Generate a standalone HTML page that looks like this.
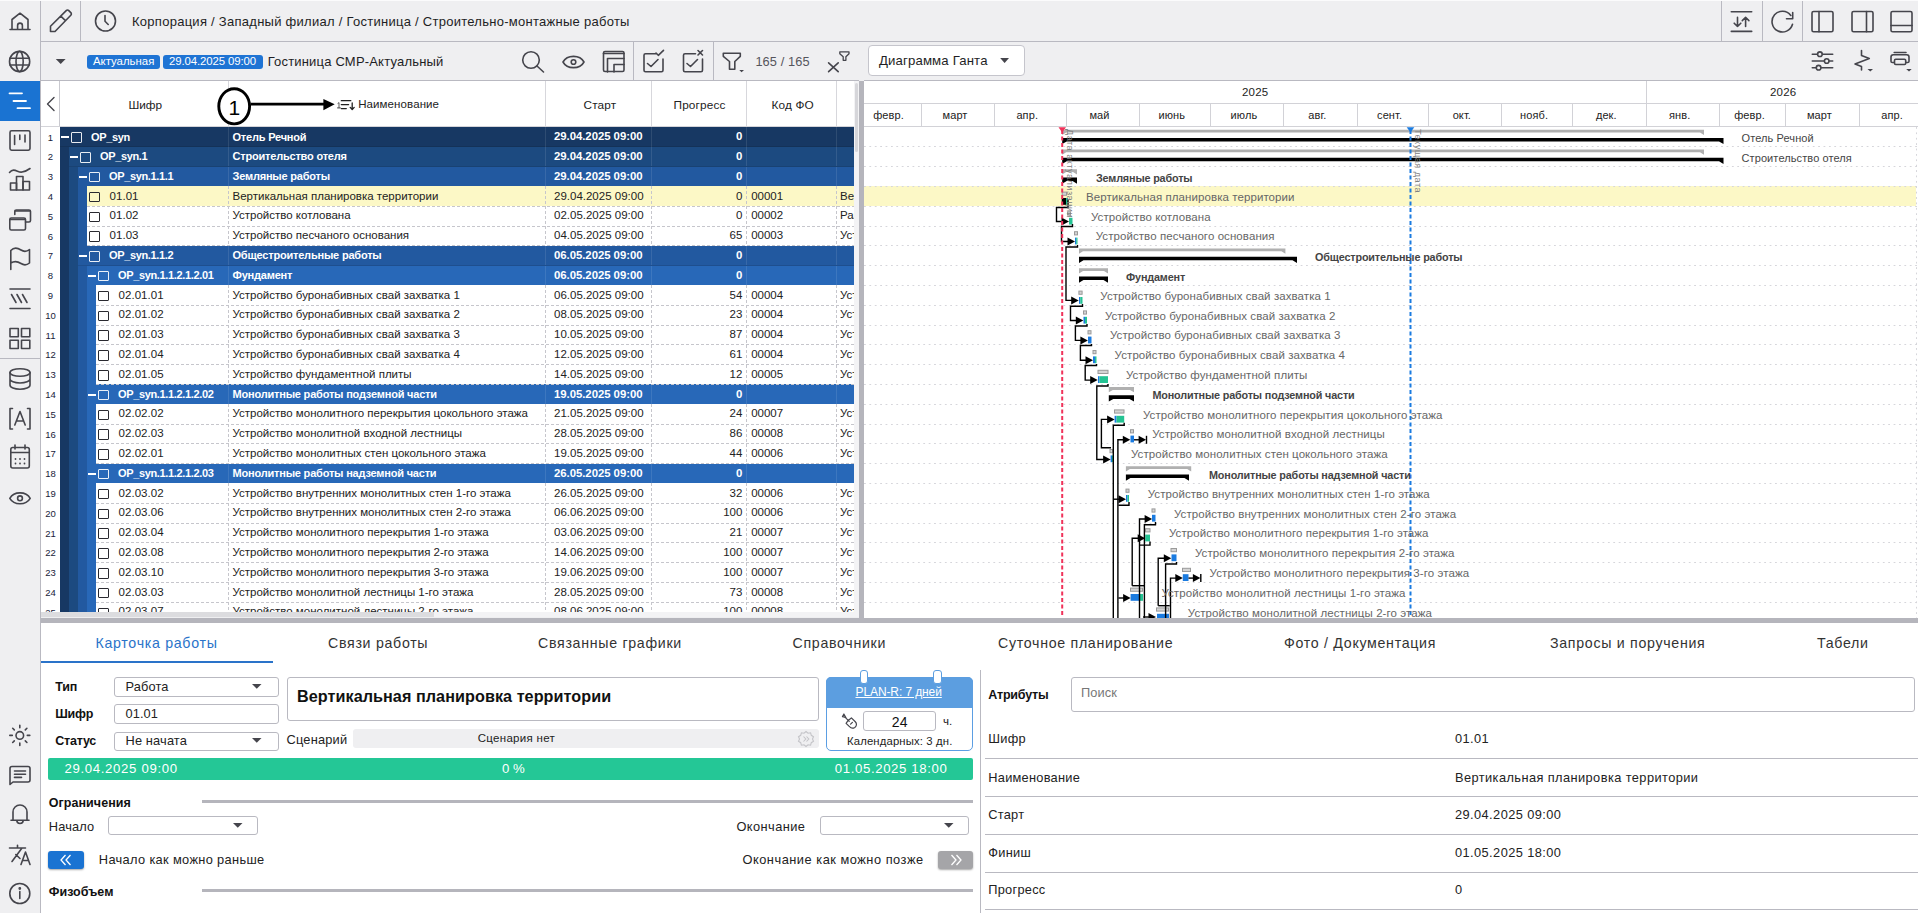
<!DOCTYPE html><html><head><meta charset="utf-8"><style>
*{box-sizing:border-box;margin:0;padding:0}
html,body{width:1918px;height:913px;overflow:hidden;background:#efeff1;font-family:"Liberation Sans",sans-serif;color:#222}
.a{position:absolute}
.t{position:absolute;white-space:nowrap;line-height:1}
svg{position:absolute;overflow:visible}
.ic{fill:none;stroke:#45454c;stroke-width:1.6;stroke-linecap:round;stroke-linejoin:round}
.vl{position:absolute;width:1px;background:#b9b9c1}
.hl{position:absolute;height:1px;background:#b9b9c1}
</style></head><body><div class="a" style="left:0px;top:0px;width:1918px;height:1px;background:#fbfbfc;"></div><div class="vl" style="left:40px;top:1px;height:912px"></div><div class="hl" style="left:41px;top:41px;width:1877px"></div><div class="vl" style="left:80px;top:1px;height:40px"></div><div class="vl" style="left:1721px;top:1px;height:40px"></div><div class="vl" style="left:1762px;top:1px;height:40px"></div><div class="vl" style="left:1802px;top:1px;height:40px"></div><div class="hl" style="left:0;top:358px;width:40px"></div><div class="a" style="left:0px;top:81px;width:40px;height:40px;background:#1a73d2;"></div><svg class="ic" style="left:0;top:0" width="40" height="913"><path d="M10 29.5H30M12 29.5V19.5L20 13.2L28 19.5V29.5M17.6 29.5V25.5A2.4 2.4 0 0 1 22.4 25.5V29.5"/><circle cx="19.6" cy="61.5" r="10.1"/><path d="M9.9 58.3H29.3M9.9 65H29.3"/><ellipse cx="19.6" cy="61.5" rx="3.6" ry="10.1"/><rect x="10" y="130.8" width="20" height="19.4" rx="1.6"/><path d="M14.6 135.5V144.5M19.8 135V139.5M25 135V142"/><path d="M9.5 172.5C14 167 18 173 22 172C25 171.5 28 170 30 168.5"/><rect x="10.5" y="183" width="6" height="7"/><rect x="16.5" y="176.5" width="6.5" height="13.5"/><rect x="23" y="181.5" width="6.5" height="8.5"/><path d="M14.8 214.5V211.5A1.5 1.5 0 0 1 16.3 210H29A1.5 1.5 0 0 1 30.5 211.5V220.5A1.5 1.5 0 0 1 29 222H25.5"/><rect x="9.8" y="218" width="15.7" height="12" rx="1.5"/><path d="M10 219.5H25.3M15 211H30.3" /><path d="M10.8 269.5V250.5C14 247 18 248 21 250C24 252 27 251.5 29.5 249.5V263C27 265 24 265.5 21 263.5C18 261.5 14 261 10.8 263"/><path d="M10 289H30M10 308.5H30M11.5 294.5L16 302.5M17 294.5L21.5 302.5M22.5 294.5L27 302.5"/><rect x="10" y="328.5" width="8.3" height="8.3"/><rect x="21.5" y="328.5" width="8.3" height="8.3"/><rect x="10" y="340.2" width="8.3" height="8.3"/><rect x="21.5" y="340.2" width="8.3" height="8.3"/><ellipse cx="20" cy="372.5" rx="10" ry="3.8"/><path d="M10 372.5V385C10 387.5 14.5 389.2 20 389.2C25.5 389.2 30 387.5 30 385V372.5M10 379C10 381.3 14.5 383 20 383C25.5 383 30 381.3 30 379"/><path d="M12.5 408.5H10V429H12.5M27.5 408.5H30V429H27.5M14.8 425L20 411.5L25.2 425M16.3 421H23.7"/><rect x="10.8" y="447.5" width="18.5" height="20.5" rx="2"/><path d="M10.8 452.5H29.3M15 445V449M25 445V449"/><g fill="#45454c" stroke="none"><circle cx="15.5" cy="459" r="0.9"/><circle cx="20" cy="459" r="0.9"/><circle cx="24.5" cy="459" r="0.9"/><circle cx="15.5" cy="463.5" r="0.9"/><circle cx="20" cy="463.5" r="0.9"/><circle cx="24.5" cy="463.5" r="0.9"/></g><path d="M9.8 498.3C14 491 26 491 30.2 498.3C26 505.5 14 505.5 9.8 498.3Z"/><circle cx="20" cy="498.3" r="2.4"/><circle cx="19.8" cy="735.4" r="3.8"/><path d="M19.8 725.3V727.8M19.8 743V745.5M9.8 735.4H12.3M27.3 735.4H29.8M12.7 728.3L14.3 729.9M25.3 740.9L26.9 742.5M12.7 742.5L14.3 740.9M25.3 729.9L26.9 728.3"/><path d="M10 784.5V768.5A2 2 0 0 1 12 766.5H28A2 2 0 0 1 30 768.5V780A2 2 0 0 1 28 782H13Z"/><path d="M14.5 771H25.5M14.5 774.2H25.5M14.5 777.4H21.5"/><path d="M11 820.3H29M13 820.3V812A7 7 0 0 1 27 812V820.3M16.8 820.3A3.2 3.2 0 0 0 23.2 820.3"/><path d="M9.5 848H25.5M17.5 845.2V848M22 848L12 861.5M15.8 854.5L20 858.5M21 864.5L25.5 852L30 864.5M22.5 860.5H28.5"/><circle cx="19.8" cy="893.5" r="10"/><path d="M19.8 891.5V898.5"/><circle cx="19.8" cy="888.5" r="0.6" fill="#45454c"/></svg><svg style="left:0;top:0" width="40" height="130"><path d="M9.5 93.3H22M13.5 101H26M17.5 108.2H30" stroke="#fff" stroke-width="1.8" stroke-linecap="round"/></svg><svg class="ic" style="left:0;top:0" width="120" height="41"><path d="M50.5 31.5V26.3L66.2 10.6A1.8 1.8 0 0 1 68.8 10.6L70.8 12.6A1.8 1.8 0 0 1 70.8 15.2L55 31.5Z M60.8 16.2L65.2 20.4"/><circle cx="105.5" cy="21" r="10"/><path d="M105 15.5V21.3L108.2 24.5"/></svg><div class="t" style="left:132px;top:14.9px;font-size:13px;color:#1e1e24;font-weight:normal;letter-spacing:0.27px;">Корпорация / Западный филиал / Гостиница / Строительно-монтажные работы</div><svg class="ic" style="left:0;top:0" width="1918" height="41"><path d="M1731.3 11.8H1751.7M1731.3 31.4H1751.7M1737.5 17.4V26.4M1734.2 23.2L1737.5 26.5L1740.8 23.2M1745.6 26.5V17.4M1742.3 20.6L1745.6 17.3L1748.9 20.6"/><path d="M1792.5 24.3A10.4 10.4 0 1 1 1790.8 15.4M1792.7 12.6V18.8H1786.5"/><rect x="1812" y="11.5" width="21" height="20.3" rx="1.6"/><path d="M1819 11.5V31.8"/><rect x="1852" y="11.5" width="21" height="20.3" rx="1.6"/><path d="M1866.5 11.5V31.8"/><rect x="1891" y="11.5" width="21" height="20.3" rx="1.6"/><path d="M1891 25.5H1912"/></svg><div class="hl" style="left:41px;top:80px;width:818px"></div><div class="hl" style="left:864px;top:80px;width:1054px"></div><svg style="left:0;top:0" width="80" height="80"><path d="M55.8 59H65.6L60.7 64Z" fill="#45454c"/></svg><div class="a" style="left:87px;top:54.5px;width:73px;height:14.5px;background:#1f74d4;border-radius:3px"></div><div class="a" style="left:163.3px;top:54.5px;width:99.6px;height:14.5px;background:#1f74d4;border-radius:3px"></div><div class="t" style="left:93px;top:56.05px;font-size:11.4px;color:#fff;font-weight:normal;letter-spacing:0px;">Актуальная</div><div class="t" style="left:169px;top:56.05px;font-size:11.4px;color:#fff;font-weight:normal;letter-spacing:-0.1px;">29.04.2025 09:00</div><div class="t" style="left:267.7px;top:54.6px;font-size:13.0px;color:#1e1e24;font-weight:normal;letter-spacing:0.19px;">Гостиница СМР-Актуальный</div><svg class="ic" style="left:0;top:0" width="860" height="81"><circle cx="531" cy="60" r="8.3"/><path d="M537 66L543.5 72"/><path d="M563 62C567 54.5 580 54.5 584 62C580 69.5 567 69.5 563 62Z"/><circle cx="573.5" cy="62" r="2.3"/><rect x="603.5" y="51.5" width="20.5" height="20" rx="1.5"/><path d="M603.5 53.5H624M607.5 72V58.5H624M614 72V64.5H624"/><path d="M656 53.7H645.5A1.5 1.5 0 0 0 644 55.2V70.3A1.5 1.5 0 0 0 645.5 71.8H661.5A1.5 1.5 0 0 0 663 70.3V59M647.5 63.5L651 66.5L658 59.5M656 53L658.3 55.3L663.5 50.3"/><path d="M695.5 53.7H685A1.5 1.5 0 0 0 683.5 55.2V70.3A1.5 1.5 0 0 0 685 71.8H701A1.5 1.5 0 0 0 702.5 70.3V59M687 63.5L690.5 66.5L697.5 59.5M698 50.5L702.5 55M702.5 50.5L698 55"/><path d="M723.3 53.3H740.3V56.3L734.8 61.5V69.3H729.5V61.5L723.3 56.3Z"/><path d="M739.3 70H744L741.6 72.2Z" fill="#45454c" stroke="none"/><path d="M828.6 62.8L838.2 71.6M838.2 62.8L828.6 71.6"/><path d="M839.8 51.8H849V53.8L845.9 56.8V60.3H843.2V56.8L839.8 53.8Z" stroke-width="1.3"/></svg><div class="vl" style="left:633px;top:42px;height:38px"></div><div class="vl" style="left:713px;top:42px;height:38px"></div><div class="t" style="left:755.4px;top:56.06px;font-size:12.8px;color:#55555c;font-weight:normal;letter-spacing:0.1px;">165 / 165</div><div class="a" style="left:868.3px;top:45.2px;width:157.2px;height:31.2px;background:#fff;border:1px solid #c5c5cc;border-radius:4px"></div><div class="t" style="left:878.9px;top:53.93px;font-size:13.2px;color:#1e1e24;font-weight:normal;letter-spacing:0.15px;">Диаграмма Ганта</div><svg style="left:0;top:0" width="1918" height="81"><path d="M1000.2 58H1009L1004.6 63Z" fill="#45454c"/></svg><svg class="ic" style="left:0;top:0" width="1918" height="81"><path d="M1812.3 54.2H1832.7M1812.3 61H1832.7M1812.3 67.7H1832.7"/><circle cx="1819.9" cy="54.2" r="2.3" fill="#efeff1"/><circle cx="1826.7" cy="61" r="2.3" fill="#efeff1"/><circle cx="1818.6" cy="67.7" r="2.3" fill="#efeff1"/><path d="M1861.5 50.5V55.5L1869.3 58.5L1855 64L1861.5 66.5V70"/><path d="M1867.5 69H1873L1870.3 71.6Z" fill="#45454c" stroke="none"/><path d="M1894.2 52.5H1906M1894 62.5H1892.3A1.3 1.3 0 0 1 1891 61.2V57A2.3 2.3 0 0 1 1893.3 54.7H1906.7A2.3 2.3 0 0 1 1909 57V61.2A1.3 1.3 0 0 1 1907.7 62.5H1906"/><rect x="1894.5" y="59.2" width="11.2" height="5.3" rx="1.2"/><path d="M1906.2 69H1911.7L1909 71.6Z" fill="#45454c" stroke="none"/></svg><div class="a" style="left:864px;top:81px;width:1054px;height:537px;background:#fff;"></div><div class="a" style="left:864px;top:102.5px;width:1054px;height:1px;background:#d2d2d7;"></div><div class="a" style="left:864px;top:125.5px;width:1054px;height:1px;background:#d2d2d7;"></div><div class="a" style="left:1645.7px;top:81px;width:1px;height:45px;background:#d2d2d7;"></div><div class="t" style="left:1242px;top:87.47px;font-size:11.5px;color:#222;font-weight:normal;letter-spacing:0.2px;">2025</div><div class="t" style="left:1770px;top:87.47px;font-size:11.5px;color:#222;font-weight:normal;letter-spacing:0.2px;">2026</div><div class="t" style="left:838.5px;width:100px;text-align:center;top:109.9885px;font-size:11px;color:#222;letter-spacing:0.1px">февр.</div><div class="a" style="left:921.0px;top:103px;width:1px;height:23px;background:#d2d2d7;"></div><div class="t" style="left:905.00865px;width:100px;text-align:center;top:109.9885px;font-size:11px;color:#222;letter-spacing:0.1px">март</div><div class="a" style="left:994.4px;top:103px;width:1px;height:23px;background:#d2d2d7;"></div><div class="t" style="left:977.2418px;width:100px;text-align:center;top:109.9885px;font-size:11px;color:#222;letter-spacing:0.1px">апр.</div><div class="a" style="left:1065.5px;top:103px;width:1px;height:23px;background:#d2d2d7;"></div><div class="t" style="left:1049.47495px;width:100px;text-align:center;top:109.9885px;font-size:11px;color:#222;letter-spacing:0.1px">май</div><div class="a" style="left:1138.9px;top:103px;width:1px;height:23px;background:#d2d2d7;"></div><div class="t" style="left:1121.7081px;width:100px;text-align:center;top:109.9885px;font-size:11px;color:#222;letter-spacing:0.1px">июнь</div><div class="a" style="left:1209.9px;top:103px;width:1px;height:23px;background:#d2d2d7;"></div><div class="t" style="left:1193.94125px;width:100px;text-align:center;top:109.9885px;font-size:11px;color:#222;letter-spacing:0.1px">июль</div><div class="a" style="left:1283.3px;top:103px;width:1px;height:23px;background:#d2d2d7;"></div><div class="t" style="left:1267.3585500000002px;width:100px;text-align:center;top:109.9885px;font-size:11px;color:#222;letter-spacing:0.1px">авг.</div><div class="a" style="left:1356.8px;top:103px;width:1px;height:23px;background:#d2d2d7;"></div><div class="t" style="left:1339.5917000000002px;width:100px;text-align:center;top:109.9885px;font-size:11px;color:#222;letter-spacing:0.1px">сент.</div><div class="a" style="left:1427.8px;top:103px;width:1px;height:23px;background:#d2d2d7;"></div><div class="t" style="left:1411.8248500000002px;width:100px;text-align:center;top:109.9885px;font-size:11px;color:#222;letter-spacing:0.1px">окт.</div><div class="a" style="left:1501.2px;top:103px;width:1px;height:23px;background:#d2d2d7;"></div><div class="t" style="left:1484.0580000000002px;width:100px;text-align:center;top:109.9885px;font-size:11px;color:#222;letter-spacing:0.1px">нояб.</div><div class="a" style="left:1572.3px;top:103px;width:1px;height:23px;background:#d2d2d7;"></div><div class="t" style="left:1556.2911500000002px;width:100px;text-align:center;top:109.9885px;font-size:11px;color:#222;letter-spacing:0.1px">дек.</div><div class="a" style="left:1645.7px;top:103px;width:1px;height:23px;background:#d2d2d7;"></div><div class="t" style="left:1629.70845px;width:100px;text-align:center;top:109.9885px;font-size:11px;color:#222;letter-spacing:0.1px">янв.</div><div class="a" style="left:1719.1px;top:103px;width:1px;height:23px;background:#d2d2d7;"></div><div class="t" style="left:1699.5733000000002px;width:100px;text-align:center;top:109.9885px;font-size:11px;color:#222;letter-spacing:0.1px">февр.</div><div class="a" style="left:1785.4px;top:103px;width:1px;height:23px;background:#d2d2d7;"></div><div class="t" style="left:1769.4381500000002px;width:100px;text-align:center;top:109.9885px;font-size:11px;color:#222;letter-spacing:0.1px">март</div><div class="a" style="left:1858.8px;top:103px;width:1px;height:23px;background:#d2d2d7;"></div><div class="t" style="left:1842px;width:100px;text-align:center;top:109.9885px;font-size:11px;color:#222;letter-spacing:0.1px">апр.</div><div class="a" style="left:864px;top:186.3px;width:1052px;height:19.8px;background:#fcf8c6;"></div><div class="a" style="left:864px;top:146.0px;width:1054px;height:1px;background-image:linear-gradient(90deg,#d6d6db 30%,transparent 30%);background-size:5.4px 1px"></div><div class="a" style="left:864px;top:166.0px;width:1054px;height:1px;background-image:linear-gradient(90deg,#d6d6db 30%,transparent 30%);background-size:5.4px 1px"></div><div class="a" style="left:864px;top:186.0px;width:1054px;height:1px;background-image:linear-gradient(90deg,#d6d6db 30%,transparent 30%);background-size:5.4px 1px"></div><div class="a" style="left:864px;top:206.0px;width:1054px;height:1px;background-image:linear-gradient(90deg,#d6d6db 30%,transparent 30%);background-size:5.4px 1px"></div><div class="a" style="left:864px;top:226.0px;width:1054px;height:1px;background-image:linear-gradient(90deg,#d6d6db 30%,transparent 30%);background-size:5.4px 1px"></div><div class="a" style="left:864px;top:245.0px;width:1054px;height:1px;background-image:linear-gradient(90deg,#d6d6db 30%,transparent 30%);background-size:5.4px 1px"></div><div class="a" style="left:864px;top:265.0px;width:1054px;height:1px;background-image:linear-gradient(90deg,#d6d6db 30%,transparent 30%);background-size:5.4px 1px"></div><div class="a" style="left:864px;top:285.0px;width:1054px;height:1px;background-image:linear-gradient(90deg,#d6d6db 30%,transparent 30%);background-size:5.4px 1px"></div><div class="a" style="left:864px;top:305.0px;width:1054px;height:1px;background-image:linear-gradient(90deg,#d6d6db 30%,transparent 30%);background-size:5.4px 1px"></div><div class="a" style="left:864px;top:325.0px;width:1054px;height:1px;background-image:linear-gradient(90deg,#d6d6db 30%,transparent 30%);background-size:5.4px 1px"></div><div class="a" style="left:864px;top:344.0px;width:1054px;height:1px;background-image:linear-gradient(90deg,#d6d6db 30%,transparent 30%);background-size:5.4px 1px"></div><div class="a" style="left:864px;top:364.0px;width:1054px;height:1px;background-image:linear-gradient(90deg,#d6d6db 30%,transparent 30%);background-size:5.4px 1px"></div><div class="a" style="left:864px;top:384.0px;width:1054px;height:1px;background-image:linear-gradient(90deg,#d6d6db 30%,transparent 30%);background-size:5.4px 1px"></div><div class="a" style="left:864px;top:404.0px;width:1054px;height:1px;background-image:linear-gradient(90deg,#d6d6db 30%,transparent 30%);background-size:5.4px 1px"></div><div class="a" style="left:864px;top:424.0px;width:1054px;height:1px;background-image:linear-gradient(90deg,#d6d6db 30%,transparent 30%);background-size:5.4px 1px"></div><div class="a" style="left:864px;top:443.0px;width:1054px;height:1px;background-image:linear-gradient(90deg,#d6d6db 30%,transparent 30%);background-size:5.4px 1px"></div><div class="a" style="left:864px;top:463.0px;width:1054px;height:1px;background-image:linear-gradient(90deg,#d6d6db 30%,transparent 30%);background-size:5.4px 1px"></div><div class="a" style="left:864px;top:483.0px;width:1054px;height:1px;background-image:linear-gradient(90deg,#d6d6db 30%,transparent 30%);background-size:5.4px 1px"></div><div class="a" style="left:864px;top:503.0px;width:1054px;height:1px;background-image:linear-gradient(90deg,#d6d6db 30%,transparent 30%);background-size:5.4px 1px"></div><div class="a" style="left:864px;top:523.0px;width:1054px;height:1px;background-image:linear-gradient(90deg,#d6d6db 30%,transparent 30%);background-size:5.4px 1px"></div><div class="a" style="left:864px;top:542.0px;width:1054px;height:1px;background-image:linear-gradient(90deg,#d6d6db 30%,transparent 30%);background-size:5.4px 1px"></div><div class="a" style="left:864px;top:562.0px;width:1054px;height:1px;background-image:linear-gradient(90deg,#d6d6db 30%,transparent 30%);background-size:5.4px 1px"></div><div class="a" style="left:864px;top:582.0px;width:1054px;height:1px;background-image:linear-gradient(90deg,#d6d6db 30%,transparent 30%);background-size:5.4px 1px"></div><div class="a" style="left:864px;top:602.0px;width:1054px;height:1px;background-image:linear-gradient(90deg,#d6d6db 30%,transparent 30%);background-size:5.4px 1px"></div><div class="a" style="left:864px;top:622.0px;width:1054px;height:1px;background-image:linear-gradient(90deg,#d6d6db 30%,transparent 30%);background-size:5.4px 1px"></div><div class="a" style="left:1916px;top:127px;width:1px;height:491px;background-image:linear-gradient(180deg,#d6d6db 40%,transparent 40%);background-size:1px 5.4px"></div><svg style="left:0;top:0" width="1918" height="618"><path d="M1062.2 129.70000000000002H1704V134.9L1700 132.5H1066.2L1062.2 134.9Z" fill="#b0b0b0"/><path d="M1062.2 137.9H1723.5V144.1L1719.0 141.5H1066.7L1062.2 144.1Z" fill="#000"/><path d="M1062.2 149.50000000000003H1704V154.70000000000002L1700 152.3H1066.2L1062.2 154.70000000000002Z" fill="#b0b0b0"/><path d="M1062.2 157.70000000000002H1723.5V163.9L1719.0 161.3H1066.7L1062.2 163.9Z" fill="#000"/><path d="M1062.2 169.3H1077V174.5L1073 172.1H1066.2L1062.2 174.5Z" fill="#b0b0b0"/><path d="M1062.2 177.5H1077V183.7L1072.5 181.1H1066.7L1062.2 183.7Z" fill="#000"/><path d="M1079 248.50000000000003H1285.4V253.70000000000002L1281.4 251.3H1083L1079 253.70000000000002Z" fill="#b0b0b0"/><path d="M1079 256.70000000000005H1297V262.90000000000003L1292.5 260.3H1083.5L1079 262.90000000000003Z" fill="#000"/><path d="M1079 268.3H1108V273.5L1104 271.1H1083L1079 273.5Z" fill="#b0b0b0"/><path d="M1079 276.5H1108V282.7L1103.5 280.1H1083.5L1079 282.7Z" fill="#000"/><path d="M1108.8 387.1000000000001H1134V392.30000000000007L1130 389.9000000000001H1112.8L1108.8 392.30000000000007Z" fill="#b0b0b0"/><path d="M1108.8 395.30000000000007H1134V401.50000000000006L1129.5 398.9000000000001H1113.3L1108.8 401.50000000000006Z" fill="#000"/><path d="M1125.9 466.3H1191.2V471.5L1187.2 469.1H1129.9L1125.9 471.5Z" fill="#b0b0b0"/><path d="M1125.9 474.5H1189V480.7L1184.5 478.1H1130.4L1125.9 480.7Z" fill="#000"/><rect x="1062.2" y="192.10000000000002" width="4.2999999999999545" height="3.2" fill="#d4d4d4" stroke="#9a9a9a" stroke-width="1"/><rect x="1061.7" y="198.0" width="4.2999999999999545" height="6.8" fill="#000"/><rect x="1066" y="198.0" width="2" height="6.8" fill="#24c393"/><rect x="1067.5" y="211.90000000000003" width="3" height="3.2" fill="#d4d4d4" stroke="#9a9a9a" stroke-width="1"/><rect x="1069" y="217.8" width="3.5" height="6.8" fill="#24c393"/><rect x="1074.5" y="231.70000000000002" width="3" height="3.2" fill="#d4d4d4" stroke="#9a9a9a" stroke-width="1"/><rect x="1075" y="237.6" width="1.2000000000000455" height="6.8" fill="#1a7be0"/><rect x="1076.2" y="237.6" width="1.2999999999999545" height="6.8" fill="#24c393"/><rect x="1078.9" y="291.1" width="3.199999999999818" height="3.2" fill="#d4d4d4" stroke="#9a9a9a" stroke-width="1"/><rect x="1079" y="297.0" width="1.2999999999999545" height="6.8" fill="#1a7be0"/><rect x="1080.3" y="297.0" width="2.2000000000000455" height="6.8" fill="#24c393"/><rect x="1083.5" y="310.90000000000003" width="3" height="3.2" fill="#d4d4d4" stroke="#9a9a9a" stroke-width="1"/><rect x="1083.5" y="316.8" width="1.5" height="6.8" fill="#1a7be0"/><rect x="1085" y="316.8" width="2" height="6.8" fill="#24c393"/><rect x="1088.0" y="330.7" width="3.0" height="3.2" fill="#d4d4d4" stroke="#9a9a9a" stroke-width="1"/><rect x="1088" y="336.59999999999997" width="3.5" height="6.8" fill="#1a7be0"/><rect x="1093.0" y="350.50000000000006" width="3.0" height="3.2" fill="#d4d4d4" stroke="#9a9a9a" stroke-width="1"/><rect x="1093" y="356.40000000000003" width="2" height="6.8" fill="#1a7be0"/><rect x="1095" y="356.40000000000003" width="1.5" height="6.8" fill="#24c393"/><rect x="1098.0" y="370.3" width="10.0" height="3.2" fill="#d4d4d4" stroke="#9a9a9a" stroke-width="1"/><rect x="1098" y="376.2" width="1.5" height="6.8" fill="#1a7be0"/><rect x="1099.5" y="376.2" width="8.5" height="6.8" fill="#24c393"/><rect x="1114.5" y="409.90000000000003" width="9.5" height="3.2" fill="#d4d4d4" stroke="#9a9a9a" stroke-width="1"/><rect x="1114.6" y="415.8" width="1.900000000000091" height="6.8" fill="#1a7be0"/><rect x="1116.5" y="415.8" width="7.7000000000000455" height="6.8" fill="#24c393"/><rect x="1130.5" y="429.7" width="3" height="3.2" fill="#d4d4d4" stroke="#9a9a9a" stroke-width="1"/><rect x="1130.5" y="435.59999999999997" width="3.5" height="6.8" fill="#1a7be0"/><rect x="1110.0" y="449.50000000000006" width="2.5" height="3.2" fill="#d4d4d4" stroke="#9a9a9a" stroke-width="1"/><rect x="1110.6" y="455.40000000000003" width="1.400000000000091" height="6.8" fill="#1a7be0"/><rect x="1112" y="455.40000000000003" width="1.2000000000000455" height="6.8" fill="#24c393"/><rect x="1126.0" y="489.1000000000001" width="3.0" height="3.2" fill="#d4d4d4" stroke="#9a9a9a" stroke-width="1"/><rect x="1126" y="495.00000000000006" width="1.5" height="6.8" fill="#1a7be0"/><rect x="1127.5" y="495.00000000000006" width="1.5" height="6.8" fill="#24c393"/><rect x="1152.0" y="508.90000000000003" width="3.0" height="3.2" fill="#d4d4d4" stroke="#9a9a9a" stroke-width="1"/><rect x="1152" y="514.8000000000001" width="3.5" height="6.8" fill="#1a7be0"/><rect x="1145.5" y="528.6999999999999" width="4.5" height="3.2" fill="#d4d4d4" stroke="#9a9a9a" stroke-width="1"/><rect x="1145.2" y="534.6" width="4.7999999999999545" height="6.8" fill="#24c393"/><rect x="1171.0" y="548.5" width="5.5" height="3.2" fill="#d4d4d4" stroke="#9a9a9a" stroke-width="1"/><rect x="1171.5" y="554.4000000000001" width="5.0" height="6.8" fill="#1a7be0"/><rect x="1182.5" y="568.3" width="8" height="3.2" fill="#d4d4d4" stroke="#9a9a9a" stroke-width="1"/><rect x="1182.8" y="574.2" width="5.7000000000000455" height="6.8" fill="#1a7be0"/><rect x="1130.5" y="588.1" width="12" height="3.2" fill="#d4d4d4" stroke="#9a9a9a" stroke-width="1"/><rect x="1130.6" y="594.0000000000001" width="9.400000000000091" height="6.8" fill="#1a7be0"/><rect x="1140" y="594.0000000000001" width="3" height="6.8" fill="#24c393"/><rect x="1156.5" y="607.9" width="12" height="3.2" fill="#d4d4d4" stroke="#9a9a9a" stroke-width="1"/><rect x="1157" y="613.8000000000001" width="12" height="6.8" fill="#1a7be0"/><path d="M1068 199V207.5H1056.5V221.5H1063" fill="none" stroke="#000" stroke-width="1.4"/><path d="M1072.5 224V226.5H1061.5V241.5H1069" fill="none" stroke="#000" stroke-width="1.4"/><path d="M1077.5 245V247H1066V300.4H1073" fill="none" stroke="#000" stroke-width="1.4"/><path d="M1082.5 304V306.3H1070.5V320.5H1077.5" fill="none" stroke="#000" stroke-width="1.4"/><path d="M1087 324V326H1075.4V340.4H1082" fill="none" stroke="#000" stroke-width="1.4"/><path d="M1091.5 344V345.5H1080.4V360.2H1087" fill="none" stroke="#000" stroke-width="1.4"/><path d="M1096.5 364V365.5H1085.2V380.1H1092" fill="none" stroke="#000" stroke-width="1.4"/><path d="M1108 384V386H1096.8V459.5H1104.5" fill="none" stroke="#000" stroke-width="1.4"/><path d="M1111 447.7H1101.4V419.4H1109" fill="none" stroke="#000" stroke-width="1.4"/><path d="M1124.2 422.7V425.3H1113.3V618" fill="none" stroke="#000" stroke-width="1.4"/><path d="M1117.9 618V439.8H1124.5" fill="none" stroke="#000" stroke-width="1.4"/><path d="M1134 439.8H1140" fill="none" stroke="#000" stroke-width="1.4"/><path d="M1146.5 435.8V443.8" fill="none" stroke="#000" stroke-width="1.4"/><path d="M1113.3 499.2H1120" fill="none" stroke="#000" stroke-width="1.4"/><path d="M1129 502V505.3H1118.4" fill="none" stroke="#000" stroke-width="1.4"/><path d="M1118.4 598H1124.5" fill="none" stroke="#000" stroke-width="1.4"/><path d="M1139.5 618V519H1146" fill="none" stroke="#000" stroke-width="1.4"/><path d="M1155.5 522V524.7H1144.4V618" fill="none" stroke="#000" stroke-width="1.4"/><path d="M1132.2 585.7V538.2H1139" fill="none" stroke="#000" stroke-width="1.4"/><path d="M1132.2 585.7H1144.4" fill="none" stroke="#000" stroke-width="1.4"/><path d="M1150 541.5V545.1H1139.5" fill="none" stroke="#000" stroke-width="1.4"/><path d="M1158.2 605.7V558.2H1165" fill="none" stroke="#000" stroke-width="1.4"/><path d="M1158.2 605.7H1169.7" fill="none" stroke="#000" stroke-width="1.4"/><path d="M1176.5 562V564H1165.6V618" fill="none" stroke="#000" stroke-width="1.4"/><path d="M1170.5 618V578.1H1177" fill="none" stroke="#000" stroke-width="1.4"/><path d="M1188.5 578.1H1194" fill="none" stroke="#000" stroke-width="1.4"/><path d="M1200.8 574.1V582.1" fill="none" stroke="#000" stroke-width="1.4"/><path d="M1143 617H1150" fill="none" stroke="#000" stroke-width="1.4"/><path d="M1061.5 217.5L1069 221.5L1061.5 225.5Z" fill="#000"/><path d="M1067.5 237.5L1075 241.5L1067.5 245.5Z" fill="#000"/><path d="M1071.2 296.4L1078.7 300.4L1071.2 304.4Z" fill="#000"/><path d="M1075.8 316.5L1083.3 320.5L1075.8 324.5Z" fill="#000"/><path d="M1080.4 336.4L1087.9 340.4L1080.4 344.4Z" fill="#000"/><path d="M1085.5 356.2L1093 360.2L1085.5 364.2Z" fill="#000"/><path d="M1090.2 376.1L1097.7 380.1L1090.2 384.1Z" fill="#000"/><path d="M1103.1 455.5L1110.6 459.5L1103.1 463.5Z" fill="#000"/><path d="M1107.1 415.4L1114.6 419.4L1107.1 423.4Z" fill="#000"/><path d="M1122.8 435.8L1130.3 439.8L1122.8 443.8Z" fill="#000"/><path d="M1138.6 435.8L1146.1 439.8L1138.6 443.8Z" fill="#000"/><path d="M1118.5 495.2L1126 499.2L1118.5 503.2Z" fill="#000"/><path d="M1123.1 594L1130.6 598L1123.1 602Z" fill="#000"/><path d="M1144.6 515L1152.1 519L1144.6 523Z" fill="#000"/><path d="M1137.7 534.2L1145.2 538.2L1137.7 542.2Z" fill="#000"/><path d="M1163.8 554.2L1171.3 558.2L1163.8 562.2Z" fill="#000"/><path d="M1175.3 574.1L1182.8 578.1L1175.3 582.1Z" fill="#000"/><path d="M1192.9 574.1L1200.4 578.1L1192.9 582.1Z" fill="#000"/><path d="M1148.5 613L1156 617L1148.5 621Z" fill="#000"/><path d="M1062.2 130V617" stroke="#f0325a" stroke-width="2" stroke-dasharray="4 2.5"/><path d="M1058.5 127.3H1066L1062.2 132.6Z" fill="#f0325a"/><path d="M1410.5 130V617" stroke="#1a7be0" stroke-width="2" stroke-dasharray="4 2.5"/><path d="M1406.7 127.3H1414.3L1410.5 132.6Z" fill="#1a7be0"/></svg><div class="t" style="left:1064.5px;top:128.5px;font-size:9.2px;color:#808080;letter-spacing:0.45px;transform-origin:0 0;transform:rotate(90deg) translate(0,-9px);">Дата актуализации</div><div class="t" style="left:1413px;top:128.5px;font-size:9.2px;color:#808080;letter-spacing:0.45px;transform-origin:0 0;transform:rotate(90deg) translate(0,-9px);">Текущая дата</div><div class="t" style="left:1741.5px;top:132.99px;font-size:11px;color:#444;font-weight:normal;letter-spacing:0.1px;">Отель Речной</div><div class="t" style="left:1741.5px;top:152.79px;font-size:11px;color:#444;font-weight:normal;letter-spacing:0.1px;">Строительство отеля</div><div class="t" style="left:1096px;top:172.56px;font-size:10.8px;color:#444;font-weight:bold;letter-spacing:-0.15px;">Земляные работы</div><div class="t" style="left:1315px;top:251.76px;font-size:10.8px;color:#444;font-weight:bold;letter-spacing:-0.15px;">Общестроительные работы</div><div class="t" style="left:1126px;top:271.56px;font-size:10.8px;color:#444;font-weight:bold;letter-spacing:-0.15px;">Фундамент</div><div class="t" style="left:1152.4px;top:390.36px;font-size:10.8px;color:#444;font-weight:bold;letter-spacing:-0.15px;">Монолитные работы подземной части</div><div class="t" style="left:1209px;top:469.56px;font-size:10.8px;color:#444;font-weight:bold;letter-spacing:-0.15px;">Монолитные работы надземной части</div><div class="t" style="left:1086px;top:191.87px;font-size:11.5px;color:#666;font-weight:normal;letter-spacing:0.08px;">Вертикальная планировка территории</div><div class="t" style="left:1091px;top:211.67px;font-size:11.5px;color:#666;font-weight:normal;letter-spacing:0.08px;">Устройство котлована</div><div class="t" style="left:1095.7px;top:231.47px;font-size:11.5px;color:#666;font-weight:normal;letter-spacing:0.08px;">Устройство песчаного основания</div><div class="t" style="left:1100.3px;top:290.87px;font-size:11.5px;color:#666;font-weight:normal;letter-spacing:0.08px;">Устройство буронабивных свай захватка 1</div><div class="t" style="left:1104.9px;top:310.67px;font-size:11.5px;color:#666;font-weight:normal;letter-spacing:0.08px;">Устройство буронабивных свай захватка 2</div><div class="t" style="left:1110px;top:330.47px;font-size:11.5px;color:#666;font-weight:normal;letter-spacing:0.08px;">Устройство буронабивных свай захватка 3</div><div class="t" style="left:1114.6px;top:350.27px;font-size:11.5px;color:#666;font-weight:normal;letter-spacing:0.08px;">Устройство буронабивных свай захватка 4</div><div class="t" style="left:1126px;top:370.07px;font-size:11.5px;color:#666;font-weight:normal;letter-spacing:0.08px;">Устройство фундаментной плиты</div><div class="t" style="left:1143px;top:409.67px;font-size:11.5px;color:#666;font-weight:normal;letter-spacing:0.08px;">Устройство монолитного перекрытия цокольного этажа</div><div class="t" style="left:1152.2px;top:429.47px;font-size:11.5px;color:#666;font-weight:normal;letter-spacing:0.08px;">Устройство монолитной входной лестницы</div><div class="t" style="left:1131px;top:449.27px;font-size:11.5px;color:#666;font-weight:normal;letter-spacing:0.08px;">Устройство монолитных стен цокольного этажа</div><div class="t" style="left:1147.7px;top:488.87px;font-size:11.5px;color:#666;font-weight:normal;letter-spacing:0.08px;">Устройство внутренних монолитных стен 1-го этажа</div><div class="t" style="left:1174px;top:508.67px;font-size:11.5px;color:#666;font-weight:normal;letter-spacing:0.08px;">Устройство внутренних монолитных стен 2-го этажа</div><div class="t" style="left:1169px;top:528.47px;font-size:11.5px;color:#666;font-weight:normal;letter-spacing:0.08px;">Устройство монолитного перекрытия 1-го этажа</div><div class="t" style="left:1195px;top:548.27px;font-size:11.5px;color:#666;font-weight:normal;letter-spacing:0.08px;">Устройство монолитного перекрытия 2-го этажа</div><div class="t" style="left:1209.6px;top:568.07px;font-size:11.5px;color:#666;font-weight:normal;letter-spacing:0.08px;">Устройство монолитного перекрытия 3-го этажа</div><div class="t" style="left:1161.4px;top:587.87px;font-size:11.5px;color:#666;font-weight:normal;letter-spacing:0.08px;">Устройство монолитной лестницы 1-го этажа</div><div class="t" style="left:1187.8px;top:607.67px;font-size:11.5px;color:#666;font-weight:normal;letter-spacing:0.08px;">Устройство монолитной лестницы 2-го этажа</div><div class="a" style="left:41px;top:81px;width:818px;height:46px;background:#fff;"></div><div class="a" style="left:59px;top:81px;width:1px;height:46px;background:#c9c9cf"></div><div class="a" style="left:41px;top:126px;width:813px;height:1px;background:#d4d4d9"></div><div class="a" style="left:228px;top:81px;width:1px;height:45px;background:#d7d7dc"></div><div class="a" style="left:545px;top:81px;width:1px;height:45px;background:#d7d7dc"></div><div class="a" style="left:651px;top:81px;width:1px;height:45px;background:#d7d7dc"></div><div class="a" style="left:746px;top:81px;width:1px;height:45px;background:#d7d7dc"></div><div class="a" style="left:836px;top:81px;width:1px;height:45px;background:#d7d7dc"></div><svg class="ic" style="left:0;top:0" width="60" height="127"><path d="M54 97.5L47.5 104L54 110.5" stroke-width="1.4"/></svg><div class="t" style="left:128.6px;top:100.01px;font-size:11.8px;color:#222;font-weight:normal;letter-spacing:-0.1px;">Шифр</div><div class="t" style="left:358.2px;top:98.97px;font-size:11.5px;color:#222;font-weight:normal;letter-spacing:0.1px;">Наименование</div><div class="t" style="left:583.5px;top:100.01px;font-size:11.8px;color:#222;font-weight:normal;letter-spacing:0.15px;">Старт</div><div class="t" style="left:673.5px;top:100.01px;font-size:11.8px;color:#222;font-weight:normal;letter-spacing:0.15px;">Прогресс</div><div class="t" style="left:771.5px;top:100.01px;font-size:11.8px;color:#222;font-weight:normal;letter-spacing:0.15px;">Код ФО</div><svg class="ic" style="left:0;top:0" width="400" height="127"><path d="M341.3 100.7H350.8M341.3 104.6H348.6M341.3 108.6H346.3M352.2 103V109.3M350.2 107.4L352.2 109.5L354.2 107.4" stroke="#222" stroke-width="1.3"/><path d="M337.9 103.4L339 102.6V107.9M337.4 107.9H340.4" stroke="#333" stroke-width="0.8"/></svg><svg style="left:0;top:0" width="400" height="130"><ellipse cx="234.2" cy="106.3" rx="15.4" ry="17.6" fill="#fff" stroke="#000" stroke-width="2.9"/><path d="M251 104.2H325" stroke="#000" stroke-width="2.8"/><path d="M323.4 98.9L334.7 104.2L323.4 110.2Z" fill="#000"/></svg><div class="t" style="left:228.5px;top:96.52px;font-size:21px;color:#000;font-weight:normal;letter-spacing:0px;">1</div><div class="a" style="left:41px;top:127px;width:813px;height:485px;overflow:hidden;background:#fff"><div class="a" style="left:19px;top:-0.09999999999999432px;width:794px;height:20.3px;background:#173863;"></div><div class="a" style="left:19px;top:19.100000000000005px;width:794px;height:0.8px;background:rgba(0,0,0,0.10);"></div><div class="a" style="left:187px;top:-0.09999999999999432px;width:1px;height:19.8px;background:rgba(255,255,255,0.10);"></div><div class="a" style="left:504px;top:-0.09999999999999432px;width:1px;height:19.8px;background:rgba(255,255,255,0.10);"></div><div class="a" style="left:610px;top:-0.09999999999999432px;width:1px;height:19.8px;background:rgba(255,255,255,0.10);"></div><div class="a" style="left:705px;top:-0.09999999999999432px;width:1px;height:19.8px;background:rgba(255,255,255,0.10);"></div><div class="a" style="left:795px;top:-0.09999999999999432px;width:1px;height:19.8px;background:rgba(255,255,255,0.10);"></div><div class="a" style="left:19.8px;top:9.200000000000006px;width:8.6px;height:2.0px;background:#fff;"></div><div class="a" style="left:29.6px;top:5.300000000000006px;width:11px;height:10.5px;border:1.2px solid rgba(255,255,255,0.9);border-radius:1px"></div><div class="t" style="left:50px;top:4.69px;font-size:11.0px;color:#fff;font-weight:bold;letter-spacing:-0.35px;">OP_syn</div><div class="t" style="left:191.5px;top:4.69px;font-size:11.0px;color:#fff;font-weight:bold;letter-spacing:-0.2px;">Отель Речной</div><div class="t" style="left:513px;top:4.35px;font-size:11.4px;color:#fff;font-weight:bold;letter-spacing:-0.05px;">29.04.2025 09:00</div><div class="t" style="right:111.60000000000002px;top:4.349900000000005px;font-size:11.4px;color:#fff;font-weight:bold">0</div><div class="a" style="left:19px;top:19.700000000000017px;width:9px;height:20.3px;background:#173863;"></div><div class="a" style="left:28px;top:19.700000000000017px;width:785px;height:20.3px;background:#1c4a80;"></div><div class="a" style="left:28px;top:38.90000000000001px;width:785px;height:0.8px;background:rgba(0,0,0,0.10);"></div><div class="a" style="left:187px;top:19.700000000000017px;width:1px;height:19.8px;background:rgba(255,255,255,0.10);"></div><div class="a" style="left:504px;top:19.700000000000017px;width:1px;height:19.8px;background:rgba(255,255,255,0.10);"></div><div class="a" style="left:610px;top:19.700000000000017px;width:1px;height:19.8px;background:rgba(255,255,255,0.10);"></div><div class="a" style="left:705px;top:19.700000000000017px;width:1px;height:19.8px;background:rgba(255,255,255,0.10);"></div><div class="a" style="left:795px;top:19.700000000000017px;width:1px;height:19.8px;background:rgba(255,255,255,0.10);"></div><div class="a" style="left:28.8px;top:29.000000000000018px;width:8.6px;height:2.0px;background:#fff;"></div><div class="a" style="left:38.6px;top:25.100000000000016px;width:11px;height:10.5px;border:1.2px solid rgba(255,255,255,0.9);border-radius:1px"></div><div class="t" style="left:59px;top:24.49px;font-size:11.0px;color:#fff;font-weight:bold;letter-spacing:-0.35px;">OP_syn.1</div><div class="t" style="left:191.5px;top:24.49px;font-size:11.0px;color:#fff;font-weight:bold;letter-spacing:-0.2px;">Строительство отеля</div><div class="t" style="left:513px;top:24.15px;font-size:11.4px;color:#fff;font-weight:bold;letter-spacing:-0.05px;">29.04.2025 09:00</div><div class="t" style="right:111.60000000000002px;top:24.149900000000017px;font-size:11.4px;color:#fff;font-weight:bold">0</div><div class="a" style="left:19px;top:39.5px;width:9px;height:20.3px;background:#173863;"></div><div class="a" style="left:28px;top:39.5px;width:9px;height:20.3px;background:#1c4a80;"></div><div class="a" style="left:37px;top:39.5px;width:776px;height:20.3px;background:#2259a0;"></div><div class="a" style="left:37px;top:58.699999999999996px;width:776px;height:0.8px;background:rgba(0,0,0,0.10);"></div><div class="a" style="left:187px;top:39.5px;width:1px;height:19.8px;background:rgba(255,255,255,0.10);"></div><div class="a" style="left:504px;top:39.5px;width:1px;height:19.8px;background:rgba(255,255,255,0.10);"></div><div class="a" style="left:610px;top:39.5px;width:1px;height:19.8px;background:rgba(255,255,255,0.10);"></div><div class="a" style="left:705px;top:39.5px;width:1px;height:19.8px;background:rgba(255,255,255,0.10);"></div><div class="a" style="left:795px;top:39.5px;width:1px;height:19.8px;background:rgba(255,255,255,0.10);"></div><div class="a" style="left:37.8px;top:48.8px;width:8.6px;height:2.0px;background:#fff;"></div><div class="a" style="left:47.6px;top:44.9px;width:11px;height:10.5px;border:1.2px solid rgba(255,255,255,0.9);border-radius:1px"></div><div class="t" style="left:68px;top:44.29px;font-size:11.0px;color:#fff;font-weight:bold;letter-spacing:-0.35px;">OP_syn.1.1.1</div><div class="t" style="left:191.5px;top:44.29px;font-size:11.0px;color:#fff;font-weight:bold;letter-spacing:-0.2px;">Земляные работы</div><div class="t" style="left:513px;top:43.95px;font-size:11.4px;color:#fff;font-weight:bold;letter-spacing:-0.05px;">29.04.2025 09:00</div><div class="t" style="right:111.60000000000002px;top:43.9499px;font-size:11.4px;color:#fff;font-weight:bold">0</div><div class="a" style="left:19px;top:59.30000000000001px;width:9px;height:20.3px;background:#173863;"></div><div class="a" style="left:28px;top:59.30000000000001px;width:9px;height:20.3px;background:#1c4a80;"></div><div class="a" style="left:37px;top:59.30000000000001px;width:9px;height:20.3px;background:#2259a0;"></div><div class="a" style="left:46px;top:59.30000000000001px;width:767px;height:19.8px;background:#fcf8c6;"></div><div class="a" style="left:187px;top:59.30000000000001px;width:1px;height:19.8px;background-image:linear-gradient(180deg,#c6c6cc 60%,transparent 60%);background-size:1px 5px"></div><div class="a" style="left:504px;top:59.30000000000001px;width:1px;height:19.8px;background-image:linear-gradient(180deg,#c6c6cc 60%,transparent 60%);background-size:1px 5px"></div><div class="a" style="left:610px;top:59.30000000000001px;width:1px;height:19.8px;background-image:linear-gradient(180deg,#c6c6cc 60%,transparent 60%);background-size:1px 5px"></div><div class="a" style="left:705px;top:59.30000000000001px;width:1px;height:19.8px;background-image:linear-gradient(180deg,#c6c6cc 60%,transparent 60%);background-size:1px 5px"></div><div class="a" style="left:795px;top:59.30000000000001px;width:1px;height:19.8px;background-image:linear-gradient(180deg,#c6c6cc 60%,transparent 60%);background-size:1px 5px"></div><div class="a" style="left:48px;top:64.70000000000002px;width:11px;height:10.8px;border:1.2px solid #2a2a30;border-radius:1px"></div><div class="t" style="left:68.5px;top:63.57px;font-size:11.5px;color:#222;font-weight:normal;letter-spacing:0.05px;">01.01</div><div class="t" style="left:191.5px;top:63.57px;font-size:11.5px;color:#222;font-weight:normal;letter-spacing:0px;">Вертикальная планировка территории</div><div class="t" style="left:513px;top:63.57px;font-size:11.5px;color:#222;font-weight:normal;letter-spacing:0px;">29.04.2025 09:00</div><div class="t" style="right:111.60000000000002px;top:63.56525000000001px;font-size:11.5px;color:#222">0</div><div class="t" style="left:710.2px;top:63.57px;font-size:11.5px;color:#222;font-weight:normal;letter-spacing:0px;">00001</div><div class="t" style="left:799px;top:63.57px;font-size:11.5px;color:#222;font-weight:normal;letter-spacing:0px;">Вертикальная</div><div class="a" style="left:19px;top:79.10000000000002px;width:9px;height:20.3px;background:#173863;"></div><div class="a" style="left:28px;top:79.10000000000002px;width:9px;height:20.3px;background:#1c4a80;"></div><div class="a" style="left:37px;top:79.10000000000002px;width:9px;height:20.3px;background:#2259a0;"></div><div class="a" style="left:46px;top:79.10000000000002px;width:767px;height:19.8px;background:#fff;"></div><div class="a" style="left:187px;top:79.10000000000002px;width:1px;height:19.8px;background-image:linear-gradient(180deg,#c6c6cc 60%,transparent 60%);background-size:1px 5px"></div><div class="a" style="left:504px;top:79.10000000000002px;width:1px;height:19.8px;background-image:linear-gradient(180deg,#c6c6cc 60%,transparent 60%);background-size:1px 5px"></div><div class="a" style="left:610px;top:79.10000000000002px;width:1px;height:19.8px;background-image:linear-gradient(180deg,#c6c6cc 60%,transparent 60%);background-size:1px 5px"></div><div class="a" style="left:705px;top:79.10000000000002px;width:1px;height:19.8px;background-image:linear-gradient(180deg,#c6c6cc 60%,transparent 60%);background-size:1px 5px"></div><div class="a" style="left:795px;top:79.10000000000002px;width:1px;height:19.8px;background-image:linear-gradient(180deg,#c6c6cc 60%,transparent 60%);background-size:1px 5px"></div><div class="a" style="left:48px;top:84.50000000000003px;width:11px;height:10.8px;border:1.2px solid #2a2a30;border-radius:1px"></div><div class="t" style="left:68.5px;top:83.37px;font-size:11.5px;color:#222;font-weight:normal;letter-spacing:0.05px;">01.02</div><div class="t" style="left:191.5px;top:83.37px;font-size:11.5px;color:#222;font-weight:normal;letter-spacing:0px;">Устройство котлована</div><div class="t" style="left:513px;top:83.37px;font-size:11.5px;color:#222;font-weight:normal;letter-spacing:0px;">02.05.2025 09:00</div><div class="t" style="right:111.60000000000002px;top:83.36525000000002px;font-size:11.5px;color:#222">0</div><div class="t" style="left:710.2px;top:83.37px;font-size:11.5px;color:#222;font-weight:normal;letter-spacing:0px;">00002</div><div class="t" style="left:799px;top:83.37px;font-size:11.5px;color:#222;font-weight:normal;letter-spacing:0px;">Разработка</div><div class="a" style="left:19px;top:98.9px;width:9px;height:20.3px;background:#173863;"></div><div class="a" style="left:28px;top:98.9px;width:9px;height:20.3px;background:#1c4a80;"></div><div class="a" style="left:37px;top:98.9px;width:9px;height:20.3px;background:#2259a0;"></div><div class="a" style="left:46px;top:98.9px;width:767px;height:19.8px;background:#fff;"></div><div class="a" style="left:187px;top:98.9px;width:1px;height:19.8px;background-image:linear-gradient(180deg,#c6c6cc 60%,transparent 60%);background-size:1px 5px"></div><div class="a" style="left:504px;top:98.9px;width:1px;height:19.8px;background-image:linear-gradient(180deg,#c6c6cc 60%,transparent 60%);background-size:1px 5px"></div><div class="a" style="left:610px;top:98.9px;width:1px;height:19.8px;background-image:linear-gradient(180deg,#c6c6cc 60%,transparent 60%);background-size:1px 5px"></div><div class="a" style="left:705px;top:98.9px;width:1px;height:19.8px;background-image:linear-gradient(180deg,#c6c6cc 60%,transparent 60%);background-size:1px 5px"></div><div class="a" style="left:795px;top:98.9px;width:1px;height:19.8px;background-image:linear-gradient(180deg,#c6c6cc 60%,transparent 60%);background-size:1px 5px"></div><div class="a" style="left:48px;top:104.30000000000001px;width:11px;height:10.8px;border:1.2px solid #2a2a30;border-radius:1px"></div><div class="t" style="left:68.5px;top:103.17px;font-size:11.5px;color:#222;font-weight:normal;letter-spacing:0.05px;">01.03</div><div class="t" style="left:191.5px;top:103.17px;font-size:11.5px;color:#222;font-weight:normal;letter-spacing:0px;">Устройство песчаного основания</div><div class="t" style="left:513px;top:103.17px;font-size:11.5px;color:#222;font-weight:normal;letter-spacing:0px;">04.05.2025 09:00</div><div class="t" style="right:111.60000000000002px;top:103.16525px;font-size:11.5px;color:#222">65</div><div class="t" style="left:710.2px;top:103.17px;font-size:11.5px;color:#222;font-weight:normal;letter-spacing:0px;">00003</div><div class="t" style="left:799px;top:103.17px;font-size:11.5px;color:#222;font-weight:normal;letter-spacing:0px;">Устройство</div><div class="a" style="left:19px;top:118.70000000000002px;width:9px;height:20.3px;background:#173863;"></div><div class="a" style="left:28px;top:118.70000000000002px;width:9px;height:20.3px;background:#1c4a80;"></div><div class="a" style="left:37px;top:118.70000000000002px;width:776px;height:20.3px;background:#2259a0;"></div><div class="a" style="left:37px;top:137.90000000000003px;width:776px;height:0.8px;background:rgba(0,0,0,0.10);"></div><div class="a" style="left:187px;top:118.70000000000002px;width:1px;height:19.8px;background:rgba(255,255,255,0.10);"></div><div class="a" style="left:504px;top:118.70000000000002px;width:1px;height:19.8px;background:rgba(255,255,255,0.10);"></div><div class="a" style="left:610px;top:118.70000000000002px;width:1px;height:19.8px;background:rgba(255,255,255,0.10);"></div><div class="a" style="left:705px;top:118.70000000000002px;width:1px;height:19.8px;background:rgba(255,255,255,0.10);"></div><div class="a" style="left:795px;top:118.70000000000002px;width:1px;height:19.8px;background:rgba(255,255,255,0.10);"></div><div class="a" style="left:37.8px;top:128.00000000000003px;width:8.6px;height:2.0px;background:#fff;"></div><div class="a" style="left:47.6px;top:124.10000000000002px;width:11px;height:10.5px;border:1.2px solid rgba(255,255,255,0.9);border-radius:1px"></div><div class="t" style="left:68px;top:123.49px;font-size:11.0px;color:#fff;font-weight:bold;letter-spacing:-0.35px;">OP_syn.1.1.2</div><div class="t" style="left:191.5px;top:123.49px;font-size:11.0px;color:#fff;font-weight:bold;letter-spacing:-0.2px;">Общестроительные работы</div><div class="t" style="left:513px;top:123.15px;font-size:11.4px;color:#fff;font-weight:bold;letter-spacing:-0.05px;">06.05.2025 09:00</div><div class="t" style="right:111.60000000000002px;top:123.14990000000002px;font-size:11.4px;color:#fff;font-weight:bold">0</div><div class="a" style="left:19px;top:138.5px;width:9px;height:20.3px;background:#173863;"></div><div class="a" style="left:28px;top:138.5px;width:9px;height:20.3px;background:#1c4a80;"></div><div class="a" style="left:37px;top:138.5px;width:9px;height:20.3px;background:#2259a0;"></div><div class="a" style="left:46px;top:138.5px;width:767px;height:20.3px;background:#2868b8;"></div><div class="a" style="left:46px;top:157.70000000000002px;width:767px;height:0.8px;background:rgba(0,0,0,0.10);"></div><div class="a" style="left:187px;top:138.5px;width:1px;height:19.8px;background:rgba(255,255,255,0.10);"></div><div class="a" style="left:504px;top:138.5px;width:1px;height:19.8px;background:rgba(255,255,255,0.10);"></div><div class="a" style="left:610px;top:138.5px;width:1px;height:19.8px;background:rgba(255,255,255,0.10);"></div><div class="a" style="left:705px;top:138.5px;width:1px;height:19.8px;background:rgba(255,255,255,0.10);"></div><div class="a" style="left:795px;top:138.5px;width:1px;height:19.8px;background:rgba(255,255,255,0.10);"></div><div class="a" style="left:46.8px;top:147.8px;width:8.6px;height:2.0px;background:#fff;"></div><div class="a" style="left:56.6px;top:143.9px;width:11px;height:10.5px;border:1.2px solid rgba(255,255,255,0.9);border-radius:1px"></div><div class="t" style="left:77px;top:143.29px;font-size:11.0px;color:#fff;font-weight:bold;letter-spacing:-0.35px;">OP_syn.1.1.2.1.2.01</div><div class="t" style="left:191.5px;top:143.29px;font-size:11.0px;color:#fff;font-weight:bold;letter-spacing:-0.2px;">Фундамент</div><div class="t" style="left:513px;top:142.95px;font-size:11.4px;color:#fff;font-weight:bold;letter-spacing:-0.05px;">06.05.2025 09:00</div><div class="t" style="right:111.60000000000002px;top:142.94989999999999px;font-size:11.4px;color:#fff;font-weight:bold">0</div><div class="a" style="left:19px;top:158.3px;width:9px;height:20.3px;background:#173863;"></div><div class="a" style="left:28px;top:158.3px;width:9px;height:20.3px;background:#1c4a80;"></div><div class="a" style="left:37px;top:158.3px;width:9px;height:20.3px;background:#2259a0;"></div><div class="a" style="left:46px;top:158.3px;width:9px;height:20.3px;background:#2868b8;"></div><div class="a" style="left:55px;top:158.3px;width:758px;height:19.8px;background:#fff;"></div><div class="a" style="left:187px;top:158.3px;width:1px;height:19.8px;background-image:linear-gradient(180deg,#c6c6cc 60%,transparent 60%);background-size:1px 5px"></div><div class="a" style="left:504px;top:158.3px;width:1px;height:19.8px;background-image:linear-gradient(180deg,#c6c6cc 60%,transparent 60%);background-size:1px 5px"></div><div class="a" style="left:610px;top:158.3px;width:1px;height:19.8px;background-image:linear-gradient(180deg,#c6c6cc 60%,transparent 60%);background-size:1px 5px"></div><div class="a" style="left:705px;top:158.3px;width:1px;height:19.8px;background-image:linear-gradient(180deg,#c6c6cc 60%,transparent 60%);background-size:1px 5px"></div><div class="a" style="left:795px;top:158.3px;width:1px;height:19.8px;background-image:linear-gradient(180deg,#c6c6cc 60%,transparent 60%);background-size:1px 5px"></div><div class="a" style="left:57px;top:163.70000000000002px;width:11px;height:10.8px;border:1.2px solid #2a2a30;border-radius:1px"></div><div class="t" style="left:77.5px;top:162.57px;font-size:11.5px;color:#222;font-weight:normal;letter-spacing:0.05px;">02.01.01</div><div class="t" style="left:191.5px;top:162.57px;font-size:11.5px;color:#222;font-weight:normal;letter-spacing:0px;">Устройство буронабивных свай захватка 1</div><div class="t" style="left:513px;top:162.57px;font-size:11.5px;color:#222;font-weight:normal;letter-spacing:0px;">06.05.2025 09:00</div><div class="t" style="right:111.60000000000002px;top:162.56525000000002px;font-size:11.5px;color:#222">54</div><div class="t" style="left:710.2px;top:162.57px;font-size:11.5px;color:#222;font-weight:normal;letter-spacing:0px;">00004</div><div class="t" style="left:799px;top:162.57px;font-size:11.5px;color:#222;font-weight:normal;letter-spacing:0px;">Устройство</div><div class="a" style="left:19px;top:178.10000000000002px;width:9px;height:20.3px;background:#173863;"></div><div class="a" style="left:28px;top:178.10000000000002px;width:9px;height:20.3px;background:#1c4a80;"></div><div class="a" style="left:37px;top:178.10000000000002px;width:9px;height:20.3px;background:#2259a0;"></div><div class="a" style="left:46px;top:178.10000000000002px;width:9px;height:20.3px;background:#2868b8;"></div><div class="a" style="left:55px;top:178.10000000000002px;width:758px;height:19.8px;background:#fff;"></div><div class="a" style="left:187px;top:178.10000000000002px;width:1px;height:19.8px;background-image:linear-gradient(180deg,#c6c6cc 60%,transparent 60%);background-size:1px 5px"></div><div class="a" style="left:504px;top:178.10000000000002px;width:1px;height:19.8px;background-image:linear-gradient(180deg,#c6c6cc 60%,transparent 60%);background-size:1px 5px"></div><div class="a" style="left:610px;top:178.10000000000002px;width:1px;height:19.8px;background-image:linear-gradient(180deg,#c6c6cc 60%,transparent 60%);background-size:1px 5px"></div><div class="a" style="left:705px;top:178.10000000000002px;width:1px;height:19.8px;background-image:linear-gradient(180deg,#c6c6cc 60%,transparent 60%);background-size:1px 5px"></div><div class="a" style="left:795px;top:178.10000000000002px;width:1px;height:19.8px;background-image:linear-gradient(180deg,#c6c6cc 60%,transparent 60%);background-size:1px 5px"></div><div class="a" style="left:57px;top:183.50000000000003px;width:11px;height:10.8px;border:1.2px solid #2a2a30;border-radius:1px"></div><div class="t" style="left:77.5px;top:182.37px;font-size:11.5px;color:#222;font-weight:normal;letter-spacing:0.05px;">02.01.02</div><div class="t" style="left:191.5px;top:182.37px;font-size:11.5px;color:#222;font-weight:normal;letter-spacing:0px;">Устройство буронабивных свай захватка 2</div><div class="t" style="left:513px;top:182.37px;font-size:11.5px;color:#222;font-weight:normal;letter-spacing:0px;">08.05.2025 09:00</div><div class="t" style="right:111.60000000000002px;top:182.36525000000003px;font-size:11.5px;color:#222">23</div><div class="t" style="left:710.2px;top:182.37px;font-size:11.5px;color:#222;font-weight:normal;letter-spacing:0px;">00004</div><div class="t" style="left:799px;top:182.37px;font-size:11.5px;color:#222;font-weight:normal;letter-spacing:0px;">Устройство</div><div class="a" style="left:19px;top:197.89999999999998px;width:9px;height:20.3px;background:#173863;"></div><div class="a" style="left:28px;top:197.89999999999998px;width:9px;height:20.3px;background:#1c4a80;"></div><div class="a" style="left:37px;top:197.89999999999998px;width:9px;height:20.3px;background:#2259a0;"></div><div class="a" style="left:46px;top:197.89999999999998px;width:9px;height:20.3px;background:#2868b8;"></div><div class="a" style="left:55px;top:197.89999999999998px;width:758px;height:19.8px;background:#fff;"></div><div class="a" style="left:187px;top:197.89999999999998px;width:1px;height:19.8px;background-image:linear-gradient(180deg,#c6c6cc 60%,transparent 60%);background-size:1px 5px"></div><div class="a" style="left:504px;top:197.89999999999998px;width:1px;height:19.8px;background-image:linear-gradient(180deg,#c6c6cc 60%,transparent 60%);background-size:1px 5px"></div><div class="a" style="left:610px;top:197.89999999999998px;width:1px;height:19.8px;background-image:linear-gradient(180deg,#c6c6cc 60%,transparent 60%);background-size:1px 5px"></div><div class="a" style="left:705px;top:197.89999999999998px;width:1px;height:19.8px;background-image:linear-gradient(180deg,#c6c6cc 60%,transparent 60%);background-size:1px 5px"></div><div class="a" style="left:795px;top:197.89999999999998px;width:1px;height:19.8px;background-image:linear-gradient(180deg,#c6c6cc 60%,transparent 60%);background-size:1px 5px"></div><div class="a" style="left:57px;top:203.29999999999998px;width:11px;height:10.8px;border:1.2px solid #2a2a30;border-radius:1px"></div><div class="t" style="left:77.5px;top:202.17px;font-size:11.5px;color:#222;font-weight:normal;letter-spacing:0.05px;">02.01.03</div><div class="t" style="left:191.5px;top:202.17px;font-size:11.5px;color:#222;font-weight:normal;letter-spacing:0px;">Устройство буронабивных свай захватка 3</div><div class="t" style="left:513px;top:202.17px;font-size:11.5px;color:#222;font-weight:normal;letter-spacing:0px;">10.05.2025 09:00</div><div class="t" style="right:111.60000000000002px;top:202.16525px;font-size:11.5px;color:#222">87</div><div class="t" style="left:710.2px;top:202.17px;font-size:11.5px;color:#222;font-weight:normal;letter-spacing:0px;">00004</div><div class="t" style="left:799px;top:202.17px;font-size:11.5px;color:#222;font-weight:normal;letter-spacing:0px;">Устройство</div><div class="a" style="left:19px;top:217.70000000000005px;width:9px;height:20.3px;background:#173863;"></div><div class="a" style="left:28px;top:217.70000000000005px;width:9px;height:20.3px;background:#1c4a80;"></div><div class="a" style="left:37px;top:217.70000000000005px;width:9px;height:20.3px;background:#2259a0;"></div><div class="a" style="left:46px;top:217.70000000000005px;width:9px;height:20.3px;background:#2868b8;"></div><div class="a" style="left:55px;top:217.70000000000005px;width:758px;height:19.8px;background:#fff;"></div><div class="a" style="left:187px;top:217.70000000000005px;width:1px;height:19.8px;background-image:linear-gradient(180deg,#c6c6cc 60%,transparent 60%);background-size:1px 5px"></div><div class="a" style="left:504px;top:217.70000000000005px;width:1px;height:19.8px;background-image:linear-gradient(180deg,#c6c6cc 60%,transparent 60%);background-size:1px 5px"></div><div class="a" style="left:610px;top:217.70000000000005px;width:1px;height:19.8px;background-image:linear-gradient(180deg,#c6c6cc 60%,transparent 60%);background-size:1px 5px"></div><div class="a" style="left:705px;top:217.70000000000005px;width:1px;height:19.8px;background-image:linear-gradient(180deg,#c6c6cc 60%,transparent 60%);background-size:1px 5px"></div><div class="a" style="left:795px;top:217.70000000000005px;width:1px;height:19.8px;background-image:linear-gradient(180deg,#c6c6cc 60%,transparent 60%);background-size:1px 5px"></div><div class="a" style="left:57px;top:223.10000000000005px;width:11px;height:10.8px;border:1.2px solid #2a2a30;border-radius:1px"></div><div class="t" style="left:77.5px;top:221.97px;font-size:11.5px;color:#222;font-weight:normal;letter-spacing:0.05px;">02.01.04</div><div class="t" style="left:191.5px;top:221.97px;font-size:11.5px;color:#222;font-weight:normal;letter-spacing:0px;">Устройство буронабивных свай захватка 4</div><div class="t" style="left:513px;top:221.97px;font-size:11.5px;color:#222;font-weight:normal;letter-spacing:0px;">12.05.2025 09:00</div><div class="t" style="right:111.60000000000002px;top:221.96525000000005px;font-size:11.5px;color:#222">61</div><div class="t" style="left:710.2px;top:221.97px;font-size:11.5px;color:#222;font-weight:normal;letter-spacing:0px;">00004</div><div class="t" style="left:799px;top:221.97px;font-size:11.5px;color:#222;font-weight:normal;letter-spacing:0px;">Устройство</div><div class="a" style="left:19px;top:237.5px;width:9px;height:20.3px;background:#173863;"></div><div class="a" style="left:28px;top:237.5px;width:9px;height:20.3px;background:#1c4a80;"></div><div class="a" style="left:37px;top:237.5px;width:9px;height:20.3px;background:#2259a0;"></div><div class="a" style="left:46px;top:237.5px;width:9px;height:20.3px;background:#2868b8;"></div><div class="a" style="left:55px;top:237.5px;width:758px;height:19.8px;background:#fff;"></div><div class="a" style="left:187px;top:237.5px;width:1px;height:19.8px;background-image:linear-gradient(180deg,#c6c6cc 60%,transparent 60%);background-size:1px 5px"></div><div class="a" style="left:504px;top:237.5px;width:1px;height:19.8px;background-image:linear-gradient(180deg,#c6c6cc 60%,transparent 60%);background-size:1px 5px"></div><div class="a" style="left:610px;top:237.5px;width:1px;height:19.8px;background-image:linear-gradient(180deg,#c6c6cc 60%,transparent 60%);background-size:1px 5px"></div><div class="a" style="left:705px;top:237.5px;width:1px;height:19.8px;background-image:linear-gradient(180deg,#c6c6cc 60%,transparent 60%);background-size:1px 5px"></div><div class="a" style="left:795px;top:237.5px;width:1px;height:19.8px;background-image:linear-gradient(180deg,#c6c6cc 60%,transparent 60%);background-size:1px 5px"></div><div class="a" style="left:57px;top:242.9px;width:11px;height:10.8px;border:1.2px solid #2a2a30;border-radius:1px"></div><div class="t" style="left:77.5px;top:241.77px;font-size:11.5px;color:#222;font-weight:normal;letter-spacing:0.05px;">02.01.05</div><div class="t" style="left:191.5px;top:241.77px;font-size:11.5px;color:#222;font-weight:normal;letter-spacing:0px;">Устройство фундаментной плиты</div><div class="t" style="left:513px;top:241.77px;font-size:11.5px;color:#222;font-weight:normal;letter-spacing:0px;">14.05.2025 09:00</div><div class="t" style="right:111.60000000000002px;top:241.76525px;font-size:11.5px;color:#222">12</div><div class="t" style="left:710.2px;top:241.77px;font-size:11.5px;color:#222;font-weight:normal;letter-spacing:0px;">00005</div><div class="t" style="left:799px;top:241.77px;font-size:11.5px;color:#222;font-weight:normal;letter-spacing:0px;">Устройство</div><div class="a" style="left:19px;top:257.30000000000007px;width:9px;height:20.3px;background:#173863;"></div><div class="a" style="left:28px;top:257.30000000000007px;width:9px;height:20.3px;background:#1c4a80;"></div><div class="a" style="left:37px;top:257.30000000000007px;width:9px;height:20.3px;background:#2259a0;"></div><div class="a" style="left:46px;top:257.30000000000007px;width:767px;height:20.3px;background:#2868b8;"></div><div class="a" style="left:46px;top:276.50000000000006px;width:767px;height:0.8px;background:rgba(0,0,0,0.10);"></div><div class="a" style="left:187px;top:257.30000000000007px;width:1px;height:19.8px;background:rgba(255,255,255,0.10);"></div><div class="a" style="left:504px;top:257.30000000000007px;width:1px;height:19.8px;background:rgba(255,255,255,0.10);"></div><div class="a" style="left:610px;top:257.30000000000007px;width:1px;height:19.8px;background:rgba(255,255,255,0.10);"></div><div class="a" style="left:705px;top:257.30000000000007px;width:1px;height:19.8px;background:rgba(255,255,255,0.10);"></div><div class="a" style="left:795px;top:257.30000000000007px;width:1px;height:19.8px;background:rgba(255,255,255,0.10);"></div><div class="a" style="left:46.8px;top:266.6000000000001px;width:8.6px;height:2.0px;background:#fff;"></div><div class="a" style="left:56.6px;top:262.70000000000005px;width:11px;height:10.5px;border:1.2px solid rgba(255,255,255,0.9);border-radius:1px"></div><div class="t" style="left:77px;top:262.09px;font-size:11.0px;color:#fff;font-weight:bold;letter-spacing:-0.35px;">OP_syn.1.1.2.1.2.02</div><div class="t" style="left:191.5px;top:262.09px;font-size:11.0px;color:#fff;font-weight:bold;letter-spacing:-0.2px;">Монолитные работы подземной части</div><div class="t" style="left:513px;top:261.75px;font-size:11.4px;color:#fff;font-weight:bold;letter-spacing:-0.05px;">19.05.2025 09:00</div><div class="t" style="right:111.60000000000002px;top:261.7499000000001px;font-size:11.4px;color:#fff;font-weight:bold">0</div><div class="a" style="left:19px;top:277.1px;width:9px;height:20.3px;background:#173863;"></div><div class="a" style="left:28px;top:277.1px;width:9px;height:20.3px;background:#1c4a80;"></div><div class="a" style="left:37px;top:277.1px;width:9px;height:20.3px;background:#2259a0;"></div><div class="a" style="left:46px;top:277.1px;width:9px;height:20.3px;background:#2868b8;"></div><div class="a" style="left:55px;top:277.1px;width:758px;height:19.8px;background:#fff;"></div><div class="a" style="left:187px;top:277.1px;width:1px;height:19.8px;background-image:linear-gradient(180deg,#c6c6cc 60%,transparent 60%);background-size:1px 5px"></div><div class="a" style="left:504px;top:277.1px;width:1px;height:19.8px;background-image:linear-gradient(180deg,#c6c6cc 60%,transparent 60%);background-size:1px 5px"></div><div class="a" style="left:610px;top:277.1px;width:1px;height:19.8px;background-image:linear-gradient(180deg,#c6c6cc 60%,transparent 60%);background-size:1px 5px"></div><div class="a" style="left:705px;top:277.1px;width:1px;height:19.8px;background-image:linear-gradient(180deg,#c6c6cc 60%,transparent 60%);background-size:1px 5px"></div><div class="a" style="left:795px;top:277.1px;width:1px;height:19.8px;background-image:linear-gradient(180deg,#c6c6cc 60%,transparent 60%);background-size:1px 5px"></div><div class="a" style="left:57px;top:282.5px;width:11px;height:10.8px;border:1.2px solid #2a2a30;border-radius:1px"></div><div class="t" style="left:77.5px;top:281.37px;font-size:11.5px;color:#222;font-weight:normal;letter-spacing:0.05px;">02.02.02</div><div class="t" style="left:191.5px;top:281.37px;font-size:11.5px;color:#222;font-weight:normal;letter-spacing:0px;">Устройство монолитного перекрытия цокольного этажа</div><div class="t" style="left:513px;top:281.37px;font-size:11.5px;color:#222;font-weight:normal;letter-spacing:0px;">21.05.2025 09:00</div><div class="t" style="right:111.60000000000002px;top:281.36525px;font-size:11.5px;color:#222">24</div><div class="t" style="left:710.2px;top:281.37px;font-size:11.5px;color:#222;font-weight:normal;letter-spacing:0px;">00007</div><div class="t" style="left:799px;top:281.37px;font-size:11.5px;color:#222;font-weight:normal;letter-spacing:0px;">Устройство</div><div class="a" style="left:19px;top:296.9px;width:9px;height:20.3px;background:#173863;"></div><div class="a" style="left:28px;top:296.9px;width:9px;height:20.3px;background:#1c4a80;"></div><div class="a" style="left:37px;top:296.9px;width:9px;height:20.3px;background:#2259a0;"></div><div class="a" style="left:46px;top:296.9px;width:9px;height:20.3px;background:#2868b8;"></div><div class="a" style="left:55px;top:296.9px;width:758px;height:19.8px;background:#fff;"></div><div class="a" style="left:187px;top:296.9px;width:1px;height:19.8px;background-image:linear-gradient(180deg,#c6c6cc 60%,transparent 60%);background-size:1px 5px"></div><div class="a" style="left:504px;top:296.9px;width:1px;height:19.8px;background-image:linear-gradient(180deg,#c6c6cc 60%,transparent 60%);background-size:1px 5px"></div><div class="a" style="left:610px;top:296.9px;width:1px;height:19.8px;background-image:linear-gradient(180deg,#c6c6cc 60%,transparent 60%);background-size:1px 5px"></div><div class="a" style="left:705px;top:296.9px;width:1px;height:19.8px;background-image:linear-gradient(180deg,#c6c6cc 60%,transparent 60%);background-size:1px 5px"></div><div class="a" style="left:795px;top:296.9px;width:1px;height:19.8px;background-image:linear-gradient(180deg,#c6c6cc 60%,transparent 60%);background-size:1px 5px"></div><div class="a" style="left:57px;top:302.29999999999995px;width:11px;height:10.8px;border:1.2px solid #2a2a30;border-radius:1px"></div><div class="t" style="left:77.5px;top:301.17px;font-size:11.5px;color:#222;font-weight:normal;letter-spacing:0.05px;">02.02.03</div><div class="t" style="left:191.5px;top:301.17px;font-size:11.5px;color:#222;font-weight:normal;letter-spacing:0px;">Устройство монолитной входной лестницы</div><div class="t" style="left:513px;top:301.17px;font-size:11.5px;color:#222;font-weight:normal;letter-spacing:0px;">28.05.2025 09:00</div><div class="t" style="right:111.60000000000002px;top:301.16524999999996px;font-size:11.5px;color:#222">86</div><div class="t" style="left:710.2px;top:301.17px;font-size:11.5px;color:#222;font-weight:normal;letter-spacing:0px;">00008</div><div class="t" style="left:799px;top:301.17px;font-size:11.5px;color:#222;font-weight:normal;letter-spacing:0px;">Устройство</div><div class="a" style="left:19px;top:316.70000000000005px;width:9px;height:20.3px;background:#173863;"></div><div class="a" style="left:28px;top:316.70000000000005px;width:9px;height:20.3px;background:#1c4a80;"></div><div class="a" style="left:37px;top:316.70000000000005px;width:9px;height:20.3px;background:#2259a0;"></div><div class="a" style="left:46px;top:316.70000000000005px;width:9px;height:20.3px;background:#2868b8;"></div><div class="a" style="left:55px;top:316.70000000000005px;width:758px;height:19.8px;background:#fff;"></div><div class="a" style="left:187px;top:316.70000000000005px;width:1px;height:19.8px;background-image:linear-gradient(180deg,#c6c6cc 60%,transparent 60%);background-size:1px 5px"></div><div class="a" style="left:504px;top:316.70000000000005px;width:1px;height:19.8px;background-image:linear-gradient(180deg,#c6c6cc 60%,transparent 60%);background-size:1px 5px"></div><div class="a" style="left:610px;top:316.70000000000005px;width:1px;height:19.8px;background-image:linear-gradient(180deg,#c6c6cc 60%,transparent 60%);background-size:1px 5px"></div><div class="a" style="left:705px;top:316.70000000000005px;width:1px;height:19.8px;background-image:linear-gradient(180deg,#c6c6cc 60%,transparent 60%);background-size:1px 5px"></div><div class="a" style="left:795px;top:316.70000000000005px;width:1px;height:19.8px;background-image:linear-gradient(180deg,#c6c6cc 60%,transparent 60%);background-size:1px 5px"></div><div class="a" style="left:57px;top:322.1px;width:11px;height:10.8px;border:1.2px solid #2a2a30;border-radius:1px"></div><div class="t" style="left:77.5px;top:320.97px;font-size:11.5px;color:#222;font-weight:normal;letter-spacing:0.05px;">02.02.01</div><div class="t" style="left:191.5px;top:320.97px;font-size:11.5px;color:#222;font-weight:normal;letter-spacing:0px;">Устройство монолитных стен цокольного этажа</div><div class="t" style="left:513px;top:320.97px;font-size:11.5px;color:#222;font-weight:normal;letter-spacing:0px;">19.05.2025 09:00</div><div class="t" style="right:111.60000000000002px;top:320.96525px;font-size:11.5px;color:#222">44</div><div class="t" style="left:710.2px;top:320.97px;font-size:11.5px;color:#222;font-weight:normal;letter-spacing:0px;">00006</div><div class="t" style="left:799px;top:320.97px;font-size:11.5px;color:#222;font-weight:normal;letter-spacing:0px;">Устройство</div><div class="a" style="left:19px;top:336.5px;width:9px;height:20.3px;background:#173863;"></div><div class="a" style="left:28px;top:336.5px;width:9px;height:20.3px;background:#1c4a80;"></div><div class="a" style="left:37px;top:336.5px;width:9px;height:20.3px;background:#2259a0;"></div><div class="a" style="left:46px;top:336.5px;width:767px;height:20.3px;background:#2868b8;"></div><div class="a" style="left:46px;top:355.7px;width:767px;height:0.8px;background:rgba(0,0,0,0.10);"></div><div class="a" style="left:187px;top:336.5px;width:1px;height:19.8px;background:rgba(255,255,255,0.10);"></div><div class="a" style="left:504px;top:336.5px;width:1px;height:19.8px;background:rgba(255,255,255,0.10);"></div><div class="a" style="left:610px;top:336.5px;width:1px;height:19.8px;background:rgba(255,255,255,0.10);"></div><div class="a" style="left:705px;top:336.5px;width:1px;height:19.8px;background:rgba(255,255,255,0.10);"></div><div class="a" style="left:795px;top:336.5px;width:1px;height:19.8px;background:rgba(255,255,255,0.10);"></div><div class="a" style="left:46.8px;top:345.8px;width:8.6px;height:2.0px;background:#fff;"></div><div class="a" style="left:56.6px;top:341.9px;width:11px;height:10.5px;border:1.2px solid rgba(255,255,255,0.9);border-radius:1px"></div><div class="t" style="left:77px;top:341.29px;font-size:11.0px;color:#fff;font-weight:bold;letter-spacing:-0.35px;">OP_syn.1.1.2.1.2.03</div><div class="t" style="left:191.5px;top:341.29px;font-size:11.0px;color:#fff;font-weight:bold;letter-spacing:-0.2px;">Монолитные работы надземной части</div><div class="t" style="left:513px;top:340.95px;font-size:11.4px;color:#fff;font-weight:bold;letter-spacing:-0.05px;">26.05.2025 09:00</div><div class="t" style="right:111.60000000000002px;top:340.9499px;font-size:11.4px;color:#fff;font-weight:bold">0</div><div class="a" style="left:19px;top:356.30000000000007px;width:9px;height:20.3px;background:#173863;"></div><div class="a" style="left:28px;top:356.30000000000007px;width:9px;height:20.3px;background:#1c4a80;"></div><div class="a" style="left:37px;top:356.30000000000007px;width:9px;height:20.3px;background:#2259a0;"></div><div class="a" style="left:46px;top:356.30000000000007px;width:9px;height:20.3px;background:#2868b8;"></div><div class="a" style="left:55px;top:356.30000000000007px;width:758px;height:19.8px;background:#fff;"></div><div class="a" style="left:187px;top:356.30000000000007px;width:1px;height:19.8px;background-image:linear-gradient(180deg,#c6c6cc 60%,transparent 60%);background-size:1px 5px"></div><div class="a" style="left:504px;top:356.30000000000007px;width:1px;height:19.8px;background-image:linear-gradient(180deg,#c6c6cc 60%,transparent 60%);background-size:1px 5px"></div><div class="a" style="left:610px;top:356.30000000000007px;width:1px;height:19.8px;background-image:linear-gradient(180deg,#c6c6cc 60%,transparent 60%);background-size:1px 5px"></div><div class="a" style="left:705px;top:356.30000000000007px;width:1px;height:19.8px;background-image:linear-gradient(180deg,#c6c6cc 60%,transparent 60%);background-size:1px 5px"></div><div class="a" style="left:795px;top:356.30000000000007px;width:1px;height:19.8px;background-image:linear-gradient(180deg,#c6c6cc 60%,transparent 60%);background-size:1px 5px"></div><div class="a" style="left:57px;top:361.70000000000005px;width:11px;height:10.8px;border:1.2px solid #2a2a30;border-radius:1px"></div><div class="t" style="left:77.5px;top:360.57px;font-size:11.5px;color:#222;font-weight:normal;letter-spacing:0.05px;">02.03.02</div><div class="t" style="left:191.5px;top:360.57px;font-size:11.5px;color:#222;font-weight:normal;letter-spacing:0px;">Устройство внутренних монолитных стен 1-го этажа</div><div class="t" style="left:513px;top:360.57px;font-size:11.5px;color:#222;font-weight:normal;letter-spacing:0px;">26.05.2025 09:00</div><div class="t" style="right:111.60000000000002px;top:360.56525000000005px;font-size:11.5px;color:#222">32</div><div class="t" style="left:710.2px;top:360.57px;font-size:11.5px;color:#222;font-weight:normal;letter-spacing:0px;">00006</div><div class="t" style="left:799px;top:360.57px;font-size:11.5px;color:#222;font-weight:normal;letter-spacing:0px;">Устройство</div><div class="a" style="left:19px;top:376.1px;width:9px;height:20.3px;background:#173863;"></div><div class="a" style="left:28px;top:376.1px;width:9px;height:20.3px;background:#1c4a80;"></div><div class="a" style="left:37px;top:376.1px;width:9px;height:20.3px;background:#2259a0;"></div><div class="a" style="left:46px;top:376.1px;width:9px;height:20.3px;background:#2868b8;"></div><div class="a" style="left:55px;top:376.1px;width:758px;height:19.8px;background:#fff;"></div><div class="a" style="left:187px;top:376.1px;width:1px;height:19.8px;background-image:linear-gradient(180deg,#c6c6cc 60%,transparent 60%);background-size:1px 5px"></div><div class="a" style="left:504px;top:376.1px;width:1px;height:19.8px;background-image:linear-gradient(180deg,#c6c6cc 60%,transparent 60%);background-size:1px 5px"></div><div class="a" style="left:610px;top:376.1px;width:1px;height:19.8px;background-image:linear-gradient(180deg,#c6c6cc 60%,transparent 60%);background-size:1px 5px"></div><div class="a" style="left:705px;top:376.1px;width:1px;height:19.8px;background-image:linear-gradient(180deg,#c6c6cc 60%,transparent 60%);background-size:1px 5px"></div><div class="a" style="left:795px;top:376.1px;width:1px;height:19.8px;background-image:linear-gradient(180deg,#c6c6cc 60%,transparent 60%);background-size:1px 5px"></div><div class="a" style="left:57px;top:381.5px;width:11px;height:10.8px;border:1.2px solid #2a2a30;border-radius:1px"></div><div class="t" style="left:77.5px;top:380.37px;font-size:11.5px;color:#222;font-weight:normal;letter-spacing:0.05px;">02.03.06</div><div class="t" style="left:191.5px;top:380.37px;font-size:11.5px;color:#222;font-weight:normal;letter-spacing:0px;">Устройство внутренних монолитных стен 2-го этажа</div><div class="t" style="left:513px;top:380.37px;font-size:11.5px;color:#222;font-weight:normal;letter-spacing:0px;">06.06.2025 09:00</div><div class="t" style="right:111.60000000000002px;top:380.36525px;font-size:11.5px;color:#222">100</div><div class="t" style="left:710.2px;top:380.37px;font-size:11.5px;color:#222;font-weight:normal;letter-spacing:0px;">00006</div><div class="t" style="left:799px;top:380.37px;font-size:11.5px;color:#222;font-weight:normal;letter-spacing:0px;">Устройство</div><div class="a" style="left:19px;top:395.9px;width:9px;height:20.3px;background:#173863;"></div><div class="a" style="left:28px;top:395.9px;width:9px;height:20.3px;background:#1c4a80;"></div><div class="a" style="left:37px;top:395.9px;width:9px;height:20.3px;background:#2259a0;"></div><div class="a" style="left:46px;top:395.9px;width:9px;height:20.3px;background:#2868b8;"></div><div class="a" style="left:55px;top:395.9px;width:758px;height:19.8px;background:#fff;"></div><div class="a" style="left:187px;top:395.9px;width:1px;height:19.8px;background-image:linear-gradient(180deg,#c6c6cc 60%,transparent 60%);background-size:1px 5px"></div><div class="a" style="left:504px;top:395.9px;width:1px;height:19.8px;background-image:linear-gradient(180deg,#c6c6cc 60%,transparent 60%);background-size:1px 5px"></div><div class="a" style="left:610px;top:395.9px;width:1px;height:19.8px;background-image:linear-gradient(180deg,#c6c6cc 60%,transparent 60%);background-size:1px 5px"></div><div class="a" style="left:705px;top:395.9px;width:1px;height:19.8px;background-image:linear-gradient(180deg,#c6c6cc 60%,transparent 60%);background-size:1px 5px"></div><div class="a" style="left:795px;top:395.9px;width:1px;height:19.8px;background-image:linear-gradient(180deg,#c6c6cc 60%,transparent 60%);background-size:1px 5px"></div><div class="a" style="left:57px;top:401.29999999999995px;width:11px;height:10.8px;border:1.2px solid #2a2a30;border-radius:1px"></div><div class="t" style="left:77.5px;top:400.17px;font-size:11.5px;color:#222;font-weight:normal;letter-spacing:0.05px;">02.03.04</div><div class="t" style="left:191.5px;top:400.17px;font-size:11.5px;color:#222;font-weight:normal;letter-spacing:0px;">Устройство монолитного перекрытия 1-го этажа</div><div class="t" style="left:513px;top:400.17px;font-size:11.5px;color:#222;font-weight:normal;letter-spacing:0px;">03.06.2025 09:00</div><div class="t" style="right:111.60000000000002px;top:400.16524999999996px;font-size:11.5px;color:#222">21</div><div class="t" style="left:710.2px;top:400.17px;font-size:11.5px;color:#222;font-weight:normal;letter-spacing:0px;">00007</div><div class="t" style="left:799px;top:400.17px;font-size:11.5px;color:#222;font-weight:normal;letter-spacing:0px;">Устройство</div><div class="a" style="left:19px;top:415.70000000000005px;width:9px;height:20.3px;background:#173863;"></div><div class="a" style="left:28px;top:415.70000000000005px;width:9px;height:20.3px;background:#1c4a80;"></div><div class="a" style="left:37px;top:415.70000000000005px;width:9px;height:20.3px;background:#2259a0;"></div><div class="a" style="left:46px;top:415.70000000000005px;width:9px;height:20.3px;background:#2868b8;"></div><div class="a" style="left:55px;top:415.70000000000005px;width:758px;height:19.8px;background:#fff;"></div><div class="a" style="left:187px;top:415.70000000000005px;width:1px;height:19.8px;background-image:linear-gradient(180deg,#c6c6cc 60%,transparent 60%);background-size:1px 5px"></div><div class="a" style="left:504px;top:415.70000000000005px;width:1px;height:19.8px;background-image:linear-gradient(180deg,#c6c6cc 60%,transparent 60%);background-size:1px 5px"></div><div class="a" style="left:610px;top:415.70000000000005px;width:1px;height:19.8px;background-image:linear-gradient(180deg,#c6c6cc 60%,transparent 60%);background-size:1px 5px"></div><div class="a" style="left:705px;top:415.70000000000005px;width:1px;height:19.8px;background-image:linear-gradient(180deg,#c6c6cc 60%,transparent 60%);background-size:1px 5px"></div><div class="a" style="left:795px;top:415.70000000000005px;width:1px;height:19.8px;background-image:linear-gradient(180deg,#c6c6cc 60%,transparent 60%);background-size:1px 5px"></div><div class="a" style="left:57px;top:421.1px;width:11px;height:10.8px;border:1.2px solid #2a2a30;border-radius:1px"></div><div class="t" style="left:77.5px;top:419.97px;font-size:11.5px;color:#222;font-weight:normal;letter-spacing:0.05px;">02.03.08</div><div class="t" style="left:191.5px;top:419.97px;font-size:11.5px;color:#222;font-weight:normal;letter-spacing:0px;">Устройство монолитного перекрытия 2-го этажа</div><div class="t" style="left:513px;top:419.97px;font-size:11.5px;color:#222;font-weight:normal;letter-spacing:0px;">14.06.2025 09:00</div><div class="t" style="right:111.60000000000002px;top:419.96525px;font-size:11.5px;color:#222">100</div><div class="t" style="left:710.2px;top:419.97px;font-size:11.5px;color:#222;font-weight:normal;letter-spacing:0px;">00007</div><div class="t" style="left:799px;top:419.97px;font-size:11.5px;color:#222;font-weight:normal;letter-spacing:0px;">Устройство</div><div class="a" style="left:19px;top:435.5px;width:9px;height:20.3px;background:#173863;"></div><div class="a" style="left:28px;top:435.5px;width:9px;height:20.3px;background:#1c4a80;"></div><div class="a" style="left:37px;top:435.5px;width:9px;height:20.3px;background:#2259a0;"></div><div class="a" style="left:46px;top:435.5px;width:9px;height:20.3px;background:#2868b8;"></div><div class="a" style="left:55px;top:435.5px;width:758px;height:19.8px;background:#fff;"></div><div class="a" style="left:187px;top:435.5px;width:1px;height:19.8px;background-image:linear-gradient(180deg,#c6c6cc 60%,transparent 60%);background-size:1px 5px"></div><div class="a" style="left:504px;top:435.5px;width:1px;height:19.8px;background-image:linear-gradient(180deg,#c6c6cc 60%,transparent 60%);background-size:1px 5px"></div><div class="a" style="left:610px;top:435.5px;width:1px;height:19.8px;background-image:linear-gradient(180deg,#c6c6cc 60%,transparent 60%);background-size:1px 5px"></div><div class="a" style="left:705px;top:435.5px;width:1px;height:19.8px;background-image:linear-gradient(180deg,#c6c6cc 60%,transparent 60%);background-size:1px 5px"></div><div class="a" style="left:795px;top:435.5px;width:1px;height:19.8px;background-image:linear-gradient(180deg,#c6c6cc 60%,transparent 60%);background-size:1px 5px"></div><div class="a" style="left:57px;top:440.9px;width:11px;height:10.8px;border:1.2px solid #2a2a30;border-radius:1px"></div><div class="t" style="left:77.5px;top:439.77px;font-size:11.5px;color:#222;font-weight:normal;letter-spacing:0.05px;">02.03.10</div><div class="t" style="left:191.5px;top:439.77px;font-size:11.5px;color:#222;font-weight:normal;letter-spacing:0px;">Устройство монолитного перекрытия 3-го этажа</div><div class="t" style="left:513px;top:439.77px;font-size:11.5px;color:#222;font-weight:normal;letter-spacing:0px;">19.06.2025 09:00</div><div class="t" style="right:111.60000000000002px;top:439.76525px;font-size:11.5px;color:#222">100</div><div class="t" style="left:710.2px;top:439.77px;font-size:11.5px;color:#222;font-weight:normal;letter-spacing:0px;">00007</div><div class="t" style="left:799px;top:439.77px;font-size:11.5px;color:#222;font-weight:normal;letter-spacing:0px;">Устройство</div><div class="a" style="left:19px;top:455.30000000000007px;width:9px;height:20.3px;background:#173863;"></div><div class="a" style="left:28px;top:455.30000000000007px;width:9px;height:20.3px;background:#1c4a80;"></div><div class="a" style="left:37px;top:455.30000000000007px;width:9px;height:20.3px;background:#2259a0;"></div><div class="a" style="left:46px;top:455.30000000000007px;width:9px;height:20.3px;background:#2868b8;"></div><div class="a" style="left:55px;top:455.30000000000007px;width:758px;height:19.8px;background:#fff;"></div><div class="a" style="left:187px;top:455.30000000000007px;width:1px;height:19.8px;background-image:linear-gradient(180deg,#c6c6cc 60%,transparent 60%);background-size:1px 5px"></div><div class="a" style="left:504px;top:455.30000000000007px;width:1px;height:19.8px;background-image:linear-gradient(180deg,#c6c6cc 60%,transparent 60%);background-size:1px 5px"></div><div class="a" style="left:610px;top:455.30000000000007px;width:1px;height:19.8px;background-image:linear-gradient(180deg,#c6c6cc 60%,transparent 60%);background-size:1px 5px"></div><div class="a" style="left:705px;top:455.30000000000007px;width:1px;height:19.8px;background-image:linear-gradient(180deg,#c6c6cc 60%,transparent 60%);background-size:1px 5px"></div><div class="a" style="left:795px;top:455.30000000000007px;width:1px;height:19.8px;background-image:linear-gradient(180deg,#c6c6cc 60%,transparent 60%);background-size:1px 5px"></div><div class="a" style="left:57px;top:460.70000000000005px;width:11px;height:10.8px;border:1.2px solid #2a2a30;border-radius:1px"></div><div class="t" style="left:77.5px;top:459.57px;font-size:11.5px;color:#222;font-weight:normal;letter-spacing:0.05px;">02.03.03</div><div class="t" style="left:191.5px;top:459.57px;font-size:11.5px;color:#222;font-weight:normal;letter-spacing:0px;">Устройство монолитной лестницы 1-го этажа</div><div class="t" style="left:513px;top:459.57px;font-size:11.5px;color:#222;font-weight:normal;letter-spacing:0px;">28.05.2025 09:00</div><div class="t" style="right:111.60000000000002px;top:459.56525000000005px;font-size:11.5px;color:#222">73</div><div class="t" style="left:710.2px;top:459.57px;font-size:11.5px;color:#222;font-weight:normal;letter-spacing:0px;">00008</div><div class="t" style="left:799px;top:459.57px;font-size:11.5px;color:#222;font-weight:normal;letter-spacing:0px;">Устройство</div><div class="a" style="left:19px;top:475.1px;width:9px;height:20.3px;background:#173863;"></div><div class="a" style="left:28px;top:475.1px;width:9px;height:20.3px;background:#1c4a80;"></div><div class="a" style="left:37px;top:475.1px;width:9px;height:20.3px;background:#2259a0;"></div><div class="a" style="left:46px;top:475.1px;width:9px;height:20.3px;background:#2868b8;"></div><div class="a" style="left:55px;top:475.1px;width:758px;height:19.8px;background:#fff;"></div><div class="a" style="left:187px;top:475.1px;width:1px;height:19.8px;background-image:linear-gradient(180deg,#c6c6cc 60%,transparent 60%);background-size:1px 5px"></div><div class="a" style="left:504px;top:475.1px;width:1px;height:19.8px;background-image:linear-gradient(180deg,#c6c6cc 60%,transparent 60%);background-size:1px 5px"></div><div class="a" style="left:610px;top:475.1px;width:1px;height:19.8px;background-image:linear-gradient(180deg,#c6c6cc 60%,transparent 60%);background-size:1px 5px"></div><div class="a" style="left:705px;top:475.1px;width:1px;height:19.8px;background-image:linear-gradient(180deg,#c6c6cc 60%,transparent 60%);background-size:1px 5px"></div><div class="a" style="left:795px;top:475.1px;width:1px;height:19.8px;background-image:linear-gradient(180deg,#c6c6cc 60%,transparent 60%);background-size:1px 5px"></div><div class="a" style="left:57px;top:480.5px;width:11px;height:10.8px;border:1.2px solid #2a2a30;border-radius:1px"></div><div class="t" style="left:77.5px;top:479.37px;font-size:11.5px;color:#222;font-weight:normal;letter-spacing:0.05px;">02.03.07</div><div class="t" style="left:191.5px;top:479.37px;font-size:11.5px;color:#222;font-weight:normal;letter-spacing:0px;">Устройство монолитной лестницы 2-го этажа</div><div class="t" style="left:513px;top:479.37px;font-size:11.5px;color:#222;font-weight:normal;letter-spacing:0px;">08.06.2025 09:00</div><div class="t" style="right:111.60000000000002px;top:479.36525px;font-size:11.5px;color:#222">100</div><div class="t" style="left:710.2px;top:479.37px;font-size:11.5px;color:#222;font-weight:normal;letter-spacing:0px;">00008</div><div class="t" style="left:799px;top:479.37px;font-size:11.5px;color:#222;font-weight:normal;letter-spacing:0px;">Устройство</div><div class="a" style="left:46px;top:79px;width:767px;height:1px;background-image:linear-gradient(90deg,#c6c6cc 60%,transparent 60%);background-size:5px 1px"></div><div class="a" style="left:46px;top:99px;width:767px;height:1px;background-image:linear-gradient(90deg,#c6c6cc 60%,transparent 60%);background-size:5px 1px"></div><div class="a" style="left:46px;top:118px;width:767px;height:1px;background-image:linear-gradient(90deg,#c6c6cc 60%,transparent 60%);background-size:5px 1px"></div><div class="a" style="left:55px;top:178px;width:758px;height:1px;background-image:linear-gradient(90deg,#c6c6cc 60%,transparent 60%);background-size:5px 1px"></div><div class="a" style="left:55px;top:198px;width:758px;height:1px;background-image:linear-gradient(90deg,#c6c6cc 60%,transparent 60%);background-size:5px 1px"></div><div class="a" style="left:55px;top:217px;width:758px;height:1px;background-image:linear-gradient(90deg,#c6c6cc 60%,transparent 60%);background-size:5px 1px"></div><div class="a" style="left:55px;top:237px;width:758px;height:1px;background-image:linear-gradient(90deg,#c6c6cc 60%,transparent 60%);background-size:5px 1px"></div><div class="a" style="left:55px;top:257px;width:758px;height:1px;background-image:linear-gradient(90deg,#c6c6cc 60%,transparent 60%);background-size:5px 1px"></div><div class="a" style="left:55px;top:297px;width:758px;height:1px;background-image:linear-gradient(90deg,#c6c6cc 60%,transparent 60%);background-size:5px 1px"></div><div class="a" style="left:55px;top:316px;width:758px;height:1px;background-image:linear-gradient(90deg,#c6c6cc 60%,transparent 60%);background-size:5px 1px"></div><div class="a" style="left:55px;top:336px;width:758px;height:1px;background-image:linear-gradient(90deg,#c6c6cc 60%,transparent 60%);background-size:5px 1px"></div><div class="a" style="left:55px;top:376px;width:758px;height:1px;background-image:linear-gradient(90deg,#c6c6cc 60%,transparent 60%);background-size:5px 1px"></div><div class="a" style="left:55px;top:396px;width:758px;height:1px;background-image:linear-gradient(90deg,#c6c6cc 60%,transparent 60%);background-size:5px 1px"></div><div class="a" style="left:55px;top:415px;width:758px;height:1px;background-image:linear-gradient(90deg,#c6c6cc 60%,transparent 60%);background-size:5px 1px"></div><div class="a" style="left:55px;top:435px;width:758px;height:1px;background-image:linear-gradient(90deg,#c6c6cc 60%,transparent 60%);background-size:5px 1px"></div><div class="a" style="left:55px;top:455px;width:758px;height:1px;background-image:linear-gradient(90deg,#c6c6cc 60%,transparent 60%);background-size:5px 1px"></div><div class="a" style="left:55px;top:475px;width:758px;height:1px;background-image:linear-gradient(90deg,#c6c6cc 60%,transparent 60%);background-size:5px 1px"></div><div class="a" style="left:55px;top:495px;width:758px;height:1px;background-image:linear-gradient(90deg,#c6c6cc 60%,transparent 60%);background-size:5px 1px"></div></div><div class="t" style="left:41px;width:19px;text-align:center;top:132.65825px;font-size:9.5px;color:#18223a">1</div><div class="t" style="left:41px;width:19px;text-align:center;top:152.45825000000002px;font-size:9.5px;color:#18223a">2</div><div class="t" style="left:41px;width:19px;text-align:center;top:172.25825px;font-size:9.5px;color:#18223a">3</div><div class="t" style="left:41px;width:19px;text-align:center;top:192.05825000000002px;font-size:9.5px;color:#18223a">4</div><div class="t" style="left:41px;width:19px;text-align:center;top:211.85825000000003px;font-size:9.5px;color:#18223a">5</div><div class="t" style="left:41px;width:19px;text-align:center;top:231.65825px;font-size:9.5px;color:#18223a">6</div><div class="t" style="left:41px;width:19px;text-align:center;top:251.45825px;font-size:9.5px;color:#18223a">7</div><div class="t" style="left:41px;width:19px;text-align:center;top:271.25825000000003px;font-size:9.5px;color:#18223a">8</div><div class="t" style="left:41px;width:19px;text-align:center;top:291.05825000000004px;font-size:9.5px;color:#18223a">9</div><div class="t" style="left:41px;width:19px;text-align:center;top:310.85825000000006px;font-size:9.5px;color:#18223a">10</div><div class="t" style="left:41px;width:19px;text-align:center;top:330.65825px;font-size:9.5px;color:#18223a">11</div><div class="t" style="left:41px;width:19px;text-align:center;top:350.4582500000001px;font-size:9.5px;color:#18223a">12</div><div class="t" style="left:41px;width:19px;text-align:center;top:370.25825000000003px;font-size:9.5px;color:#18223a">13</div><div class="t" style="left:41px;width:19px;text-align:center;top:390.0582500000001px;font-size:9.5px;color:#18223a">14</div><div class="t" style="left:41px;width:19px;text-align:center;top:409.85825000000006px;font-size:9.5px;color:#18223a">15</div><div class="t" style="left:41px;width:19px;text-align:center;top:429.65825px;font-size:9.5px;color:#18223a">16</div><div class="t" style="left:41px;width:19px;text-align:center;top:449.4582500000001px;font-size:9.5px;color:#18223a">17</div><div class="t" style="left:41px;width:19px;text-align:center;top:469.25825000000003px;font-size:9.5px;color:#18223a">18</div><div class="t" style="left:41px;width:19px;text-align:center;top:489.0582500000001px;font-size:9.5px;color:#18223a">19</div><div class="t" style="left:41px;width:19px;text-align:center;top:508.85825px;font-size:9.5px;color:#18223a">20</div><div class="t" style="left:41px;width:19px;text-align:center;top:528.65825px;font-size:9.5px;color:#18223a">21</div><div class="t" style="left:41px;width:19px;text-align:center;top:548.45825px;font-size:9.5px;color:#18223a">22</div><div class="t" style="left:41px;width:19px;text-align:center;top:568.25825px;font-size:9.5px;color:#18223a">23</div><div class="t" style="left:41px;width:19px;text-align:center;top:588.05825px;font-size:9.5px;color:#18223a">24</div><div class="t" style="left:41px;width:19px;text-align:center;top:607.85825px;font-size:9.5px;color:#18223a">25</div><div class="a" style="left:41px;top:127px;width:18px;height:485px;background:transparent;"></div><div class="a" style="left:854px;top:81px;width:5px;height:536px;background:#f3f3f5;"></div><div class="a" style="left:854.5px;top:83px;width:3px;height:69px;background:#d6d6da;border-radius:2px"></div><div class="a" style="left:41px;top:612px;width:813px;height:5px;background:#f3f3f5;"></div><div class="a" style="left:41px;top:612.3px;width:393px;height:5.2px;background:#dcdcdf;"></div><div class="a" style="left:859px;top:81px;width:5px;height:537px;background:#b5b5bc;"></div><div class="a" style="left:41px;top:617.5px;width:1877px;height:5px;background:#b5b5bc;"></div><div class="a" style="left:41px;top:622.5px;width:1877px;height:291px;background:#fff;"></div><div class="t" style="left:95.5px;top:635.98px;font-size:14.2px;color:#2a73c9;font-weight:normal;letter-spacing:0.7px;">Карточка работы</div><div class="t" style="left:328px;top:635.98px;font-size:14.2px;color:#333;font-weight:normal;letter-spacing:0.7px;">Связи работы</div><div class="t" style="left:538px;top:635.98px;font-size:14.2px;color:#333;font-weight:normal;letter-spacing:0.7px;">Связанные графики</div><div class="t" style="left:792.5px;top:635.98px;font-size:14.2px;color:#333;font-weight:normal;letter-spacing:0.7px;">Справочники</div><div class="t" style="left:998px;top:635.98px;font-size:14.2px;color:#333;font-weight:normal;letter-spacing:0.7px;">Суточное планирование</div><div class="t" style="left:1284px;top:635.98px;font-size:14.2px;color:#333;font-weight:normal;letter-spacing:0.7px;">Фото / Документация</div><div class="t" style="left:1550px;top:635.98px;font-size:14.2px;color:#333;font-weight:normal;letter-spacing:0.7px;">Запросы и поручения</div><div class="t" style="left:1817px;top:635.98px;font-size:14.2px;color:#333;font-weight:normal;letter-spacing:0.7px;">Табели</div><div class="a" style="left:41px;top:660.5px;width:232px;height:2.2px;background:#2a73c9;"></div><div class="t" style="left:55.2px;top:681.42px;font-size:12.5px;color:#111;font-weight:bold;letter-spacing:-0.2px;">Тип</div><div class="t" style="left:55.2px;top:708.42px;font-size:12.5px;color:#111;font-weight:bold;letter-spacing:-0.2px;">Шифр</div><div class="t" style="left:55.2px;top:735.42px;font-size:12.5px;color:#111;font-weight:bold;letter-spacing:-0.2px;">Статус</div><div class="a" style="left:114.3px;top:677.2px;width:164.3px;height:19.6px;border:1px solid #b9b9c1;border-radius:3px;background:#fff"></div><div class="a" style="left:114.3px;top:704px;width:164.3px;height:19.7px;border:1px solid #b9b9c1;border-radius:3px;background:#fff"></div><div class="a" style="left:114.3px;top:731.5px;width:164.3px;height:19.1px;border:1px solid #b9b9c1;border-radius:3px;background:#fff"></div><div class="t" style="left:125.5px;top:681.16px;font-size:12.8px;color:#222;font-weight:normal;letter-spacing:0.15px;">Работа</div><div class="t" style="left:125.5px;top:708.46px;font-size:12.8px;color:#222;font-weight:normal;letter-spacing:0.1px;">01.01</div><div class="t" style="left:125.5px;top:735.16px;font-size:12.8px;color:#222;font-weight:normal;letter-spacing:0.15px;">Не начата</div><svg style="left:252px;top:684px" width="9.5" height="4.8"><path d="M0 0H9.5L4.75 4.8Z" fill="#45454c"/></svg><svg style="left:252px;top:738px" width="9.5" height="4.8"><path d="M0 0H9.5L4.75 4.8Z" fill="#45454c"/></svg><div class="a" style="left:286.5px;top:677.2px;width:532.1px;height:44.1px;border:1px solid #b9b9c1;border-radius:3px;background:#fff"></div><div class="t" style="left:297px;top:688.09px;font-size:16.2px;color:#111;font-weight:bold;letter-spacing:0.05px;">Вертикальная планировка территории</div><div class="t" style="left:286.5px;top:734.46px;font-size:12.8px;color:#222;font-weight:normal;letter-spacing:0.2px;">Сценарий</div><div class="a" style="left:353px;top:729px;width:465.6px;height:19.4px;background:#efeff1;border-radius:3px"></div><div class="t" style="left:477.7px;top:732.57px;font-size:11.5px;color:#222;font-weight:normal;letter-spacing:0.3px;">Сценария нет</div><svg style="left:797px;top:730px" width="18" height="18"><path d="M9 1.5L11 3.2L13.6 2.8L14.3 5.3L16.5 6.7L15.5 9L16.5 11.3L14.3 12.7L13.6 15.2L11 14.8L9 16.5L7 14.8L4.4 15.2L3.7 12.7L1.5 11.3L2.5 9L1.5 6.7L3.7 5.3L4.4 2.8L7 3.2Z" fill="none" stroke="#c4c4c8" stroke-width="1.1"/><path d="M6.5 6.5L8.8 9L6.5 11.5M9.5 6.5L11.8 9L9.5 11.5" fill="none" stroke="#c4c4c8" stroke-width="1.1"/></svg><div class="a" style="left:826.4px;top:677px;width:146.6px;height:73.7px;background:#fff;border:1.5px solid #5b9ee3;border-radius:5px"></div><div class="a" style="left:826.4px;top:677px;width:146.6px;height:30.5px;background:#5c9ee0;border-radius:5px 5px 0 0"></div><div class="a" style="left:859.5px;top:669.7px;width:8.5px;height:14px;background:#fff;border:1.5px solid #5c9ee0;border-radius:3px"></div><div class="a" style="left:933.0px;top:669.7px;width:8.5px;height:14px;background:#fff;border:1.5px solid #5c9ee0;border-radius:3px"></div><div class="t" style="left:855.5px;top:686.14px;font-size:12px;color:#fff;font-weight:normal;letter-spacing:-0.1px;"><u>PLAN-R: 7 дней</u></div><div class="a" style="left:863.3px;top:711px;width:72.6px;height:19.5px;border:1px solid #b9b9c1;border-radius:3px;background:#fff"></div><div class="t" style="left:891.7px;top:714.65px;font-size:14px;color:#111;font-weight:normal;letter-spacing:0.3px;">24</div><div class="t" style="left:943px;top:716.27px;font-size:11.5px;color:#222;font-weight:normal;letter-spacing:0px;">ч.</div><svg class="ic" style="left:0;top:0" width="980" height="760"><path d="M842.4 716.6L843.9 713.9L845.9 717.4Z" stroke-width="1.1"/><path d="M845.2 717.3L849.2 721.3M848.1 720.4L851.4 717.9L855.3 721.7C857 723.4 856.8 726.1 854.8 727.4C853 728.5 850.8 728.1 849.5 726.7L846.1 723.3Z M850.6 724.2L852.4 722.4" stroke-width="1.2"/></svg><div class="t" style="left:847px;top:735.63px;font-size:11.3px;color:#222;font-weight:normal;letter-spacing:0.15px;">Календарных: 3 дн.</div><div class="a" style="left:48.1px;top:758px;width:924.9px;height:21.7px;background:#24c796;border-radius:2px"></div><div class="t" style="left:64.5px;top:761.83px;font-size:13.2px;color:#fff;font-weight:normal;letter-spacing:0.66px;">29.04.2025 09:00</div><div class="t" style="left:502px;top:761.83px;font-size:13.2px;color:#fff;font-weight:normal;letter-spacing:0px;">0 %</div><div class="t" style="left:834.8px;top:761.83px;font-size:13.2px;color:#fff;font-weight:normal;letter-spacing:0.62px;">01.05.2025 18:00</div><div class="t" style="left:48.8px;top:796.62px;font-size:12.5px;color:#111;font-weight:bold;letter-spacing:0.05px;">Ограничения</div><div class="a" style="left:202px;top:800.2px;width:771.3px;height:2.5px;background:#b5b5bc;"></div><div class="t" style="left:48.8px;top:821.16px;font-size:12.8px;color:#222;font-weight:normal;letter-spacing:0.15px;">Начало</div><div class="a" style="left:108px;top:816.3px;width:150.3px;height:19px;border:1px solid #b9b9c1;border-radius:3px;background:#fff"></div><svg style="left:232.5px;top:823px" width="9.5" height="4.8"><path d="M0 0H9.5L4.75 4.8Z" fill="#45454c"/></svg><div class="t" style="left:736.5px;top:821.16px;font-size:12.8px;color:#222;font-weight:normal;letter-spacing:0.42px;">Окончание</div><div class="a" style="left:820px;top:816.3px;width:149px;height:19px;border:1px solid #b9b9c1;border-radius:3px;background:#fff"></div><svg style="left:943.5px;top:823px" width="9.5" height="4.8"><path d="M0 0H9.5L4.75 4.8Z" fill="#45454c"/></svg><div class="a" style="left:48.3px;top:850.8px;width:35.5px;height:18px;background:#1a73d2;border-radius:3px;box-shadow:0 1px 2px rgba(0,0,0,0.35)"></div><svg style="left:58px;top:853px" width="18" height="14"><path d="M7.5 2L3 7L7.5 12M12.5 2L8 7L12.5 12" fill="none" stroke="#fff" stroke-width="1.3"/></svg><div class="t" style="left:98.8px;top:853.96px;font-size:12.8px;color:#222;font-weight:normal;letter-spacing:0.35px;">Начало как можно раньше</div><div class="t" style="left:742.5px;top:853.96px;font-size:12.8px;color:#222;font-weight:normal;letter-spacing:0.52px;">Окончание как можно позже</div><div class="a" style="left:937.5px;top:850.8px;width:35.8px;height:18px;background:#a5a5a8;border-radius:3px;box-shadow:0 1px 2px rgba(0,0,0,0.35)"></div><svg style="left:946px;top:853px" width="18" height="14"><path d="M5.5 2L10 7L5.5 12M10.5 2L15 7L10.5 12" fill="none" stroke="#fff" stroke-width="1.3"/></svg><div class="t" style="left:48.8px;top:885.62px;font-size:12.5px;color:#111;font-weight:bold;letter-spacing:0.0px;">Физобъем</div><div class="a" style="left:202px;top:889px;width:771.3px;height:2.5px;background:#b5b5bc;"></div><div class="a" style="left:980px;top:669.7px;width:1px;height:243.3px;background:#b9b9c1;"></div><div class="t" style="left:988.3px;top:689.42px;font-size:12.5px;color:#111;font-weight:bold;letter-spacing:-0.2px;">Атрибуты</div><div class="a" style="left:1070.6px;top:677.2px;width:844.2px;height:34.8px;border:1px solid #b9b9c1;border-radius:3px;background:#fff"></div><div class="t" style="left:1081px;top:687.46px;font-size:12.8px;color:#777;font-weight:normal;letter-spacing:0.1px;">Поиск</div><div class="t" style="left:988.3px;top:732.96px;font-size:12.8px;color:#222;font-weight:normal;letter-spacing:0.25px;">Шифр</div><div class="t" style="left:1455px;top:732.96px;font-size:12.8px;color:#222;font-weight:normal;letter-spacing:0.42px;">01.01</div><div class="t" style="left:988.3px;top:771.96px;font-size:12.8px;color:#222;font-weight:normal;letter-spacing:0.25px;">Наименование</div><div class="t" style="left:1455px;top:771.96px;font-size:12.8px;color:#222;font-weight:normal;letter-spacing:0.42px;">Вертикальная планировка территории</div><div class="t" style="left:988.3px;top:808.96px;font-size:12.8px;color:#222;font-weight:normal;letter-spacing:0.25px;">Старт</div><div class="t" style="left:1455px;top:808.96px;font-size:12.8px;color:#222;font-weight:normal;letter-spacing:0.42px;">29.04.2025 09:00</div><div class="t" style="left:988.3px;top:846.96px;font-size:12.8px;color:#222;font-weight:normal;letter-spacing:0.25px;">Финиш</div><div class="t" style="left:1455px;top:846.96px;font-size:12.8px;color:#222;font-weight:normal;letter-spacing:0.42px;">01.05.2025 18:00</div><div class="t" style="left:988.3px;top:884.46px;font-size:12.8px;color:#222;font-weight:normal;letter-spacing:0.25px;">Прогресс</div><div class="t" style="left:1455px;top:884.46px;font-size:12.8px;color:#222;font-weight:normal;letter-spacing:0.42px;">0</div><div class="a" style="left:985.3px;top:758.4px;width:933px;height:1px;background:#b9b9c1;"></div><div class="a" style="left:985.3px;top:796.4px;width:933px;height:1px;background:#b9b9c1;"></div><div class="a" style="left:985.3px;top:833.8px;width:933px;height:1px;background:#b9b9c1;"></div><div class="a" style="left:985.3px;top:871.5px;width:933px;height:1px;background:#b9b9c1;"></div><div class="a" style="left:985.3px;top:909.4px;width:933px;height:1px;background:#b9b9c1;"></div></body></html>
